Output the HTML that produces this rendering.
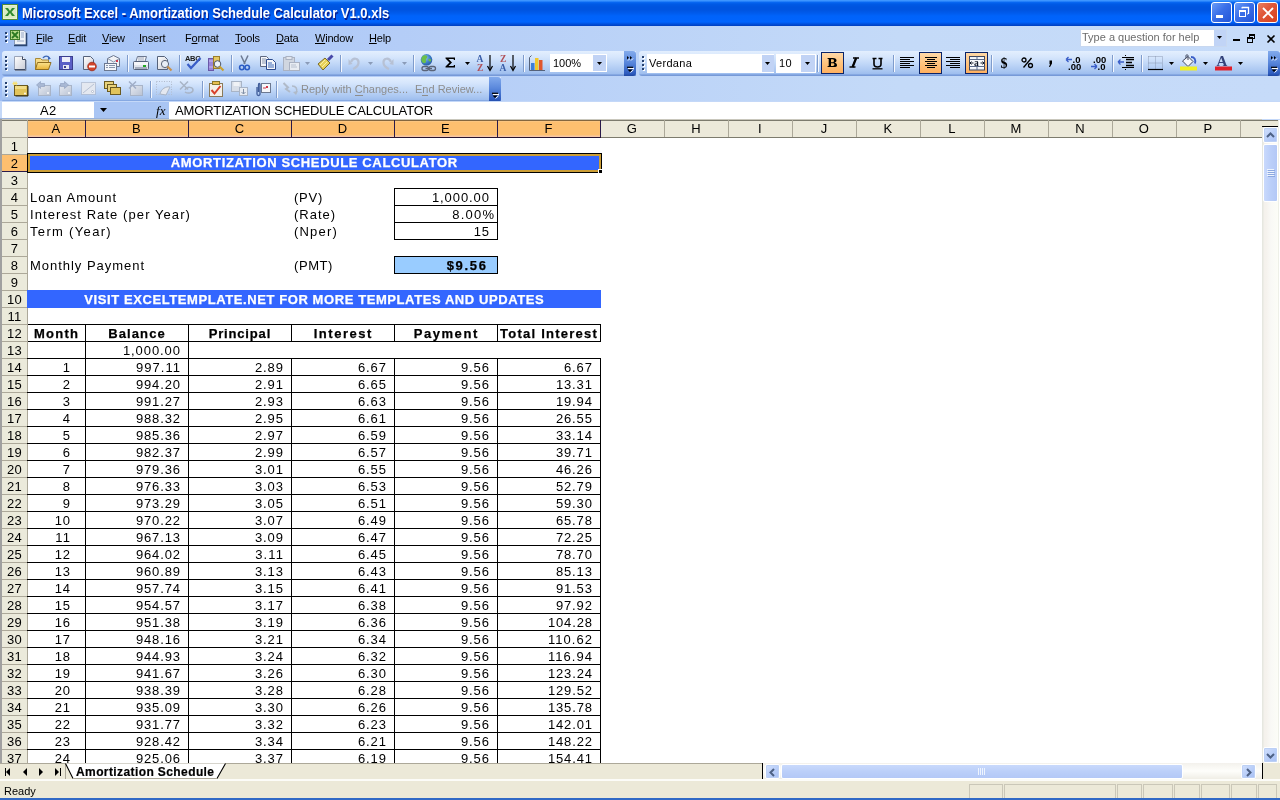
<!DOCTYPE html><html><head><meta charset="utf-8"><style>
html,body{margin:0;padding:0;}
body{width:1280px;height:800px;overflow:hidden;position:relative;background:#fff;will-change:transform;font-family:"Liberation Sans",sans-serif;}
div{box-sizing:border-box;}
.t{position:absolute;white-space:nowrap;font-size:13px;line-height:17px;color:#000;letter-spacing:0.65px;}
.b{font-weight:bold;letter-spacing:0.6px;}
.r{text-align:right;}
.c{text-align:center;}
.hd{position:absolute;font-size:13px;line-height:16px;text-align:center;color:#000;white-space:nowrap;}
.mn{position:absolute;top:32px;font-size:11px;line-height:12px;color:#000;white-space:nowrap;letter-spacing:-0.2px;}
.mn u{text-decoration:underline;text-underline-offset:1px;text-decoration-thickness:1px;}
svg{position:absolute;overflow:visible;}
</style></head><body>
<div style="position:absolute;left:0px;top:0px;width:1280px;height:26px;background:linear-gradient(#3D95FF 0px,#3D95FF 1px,#0A6AF4 2px,#005AE6 4px,#0054DF 7px,#0054E0 10px,#005BEC 13px,#0063FA 16px,#0064FE 22px,#0050DD 24px,#003FBF 26px);"></div>
<svg style="left:2px;top:4px" width="16" height="16" viewBox="0 0 16 16"><rect x="0.5" y="0.5" width="15" height="15" fill="#E8F2D4" stroke="#4E8A3A"/><rect x="2" y="2" width="12" height="12" fill="#D9EBC2"/><path d="M3 4h3l2 3 2-3h3l-3.5 4 3.5 4h-3l-2-3-2 3H3l3.5-4z" fill="#2F8A2F"/></svg>
<div style="position:absolute;left:22px;top:5px;font-size:13px;line-height:16px;font-weight:bold;color:#fff;text-shadow:1px 1px #0A1E8C;transform:scaleY(1.12);transform-origin:0 0;">Microsoft Excel - Amortization Schedule Calculator V1.0.xls</div>
<div style="position:absolute;left:1211px;top:2px;width:21px;height:21px;background:linear-gradient(135deg,#6A9CF8,#3B6FE8 45%,#2255D8);border:1px solid #fff;border-radius:3px;"></div>
<div style="position:absolute;left:1234px;top:2px;width:21px;height:21px;background:linear-gradient(135deg,#6A9CF8,#3B6FE8 45%,#2255D8);border:1px solid #fff;border-radius:3px;"></div>
<div style="position:absolute;left:1257px;top:2px;width:21px;height:21px;background:linear-gradient(135deg,#E98060,#E0583A 40%,#D8401E);border:1px solid #fff;border-radius:3px;"></div>
<div style="position:absolute;left:1216px;top:15px;width:7px;height:3px;background:#fff;"></div>
<svg style="left:1238px;top:6px" width="12" height="12"><path d="M4 1.5H10.5V8" stroke="#fff" stroke-width="1.3" fill="none"/><path d="M4 1V2.5M10 8H9" stroke="#fff"/></svg>
<div style="position:absolute;left:1239px;top:10px;width:7px;height:7px;border:1px solid #fff;border-top-width:2px;"></div>
<svg style="left:1262px;top:7px" width="12" height="12"><path d="M1 1L11 11M11 1L1 11" stroke="#fff" stroke-width="1.8"/></svg>
<div style="position:absolute;left:0px;top:26px;width:1280px;height:76px;background:linear-gradient(90deg,#A0BFF5 0px,#B4CDF7 400px,#C4DAF8 900px,#C6DBF9 1280px);"></div>
<div style="position:absolute;left:5px;top:32px;width:2px;height:2px;background:#27416F;box-shadow:1px 1px #fff;"></div>
<div style="position:absolute;left:5px;top:36px;width:2px;height:2px;background:#27416F;box-shadow:1px 1px #fff;"></div>
<div style="position:absolute;left:5px;top:40px;width:2px;height:2px;background:#27416F;box-shadow:1px 1px #fff;"></div>
<svg style="left:10px;top:29px" width="18" height="18" viewBox="0 0 18 18"><path d="M4.5 1.5H14L16.5 4V15.5H4.5Z" fill="#EEF2F8" stroke="#8A9AB8"/><path d="M16.5 4V16.5H4" stroke="#2B4570" stroke-width="1.6" fill="none"/><path d="M11 4h3M11 6h3M11 8h3M7 12h7" stroke="#98A8C4"/><rect x="0.5" y="1.5" width="9" height="9" fill="#B9DC8A" stroke="#3F7B2B"/><path d="M2 3l6 6M8 3l-6 6" stroke="#2C7A22" stroke-width="1.8"/></svg>
<div class="mn" style="left:36px;"><u>F</u>ile</div>
<div class="mn" style="left:68px;"><u>E</u>dit</div>
<div class="mn" style="left:102px;"><u>V</u>iew</div>
<div class="mn" style="left:139px;"><u>I</u>nsert</div>
<div class="mn" style="left:185px;">F<u>o</u>rmat</div>
<div class="mn" style="left:235px;"><u>T</u>ools</div>
<div class="mn" style="left:276px;"><u>D</u>ata</div>
<div class="mn" style="left:315px;"><u>W</u>indow</div>
<div class="mn" style="left:369px;"><u>H</u>elp</div>
<div style="position:absolute;left:1080px;top:29px;width:147px;height:18px;background:#fff;border:1px solid #C8D8F0;"></div>
<div style="position:absolute;left:1082px;top:31px;font-size:11px;line-height:13px;color:#6D6D6D;">Type a question for help</div>
<div style="position:absolute;left:1214px;top:30px;width:12px;height:16px;background:#C1D4F6;"></div>
<svg style="left:1217px;top:36px" width="6" height="4"><path d="M0 0h5L2.5 3z" fill="#000"/></svg>
<div style="position:absolute;left:1233px;top:39px;width:7px;height:2px;background:#000;"></div>
<div style="position:absolute;left:1249px;top:34px;width:6px;height:5px;border:1px solid #000;border-top-width:2px;"></div>
<div style="position:absolute;left:1247px;top:37px;width:6px;height:6px;border:1px solid #000;border-top-width:2px;background:#C6DBF9;"></div>
<svg style="left:1267px;top:35px" width="8" height="8"><path d="M0.5 0.5L7.5 7.5M7.5 0.5L0.5 7.5" stroke="#000" stroke-width="1.6"/></svg>
<div style="position:absolute;left:2px;top:51px;width:634px;height:25px;background:linear-gradient(#E3EFFE 0px,#D6E6FC 6px,#C3D9F8 12px,#A9C6F1 20px,#9DBDEE 23px,#6F94D6 24px,#7F9FD8 25px);border-radius:3px 0 0 3px;"></div>
<div style="position:absolute;left:624px;top:51px;width:12px;height:25px;background:linear-gradient(#82AAEC,#5A88DC 45%,#2D5BBE 90%,#1E46A0);border-radius:0 3px 3px 0;"></div>
<svg style="left:626px;top:55px" width="9" height="18"><path d="M2 5.5L4 3.5M5 5.5L7 3.5" stroke="#fff" stroke-width="1"/><path d="M1 1V4.5L3 2.8ZM4 1V4.5L6 2.8Z" fill="#000"/><path d="M2 13.5H8" stroke="#fff" stroke-width="1.2"/><path d="M1 12.3H7" stroke="#000" stroke-width="1.2"/><path d="M1.5 14.5H6.5L4 17Z" fill="#000"/><path d="M4.5 17.5L7.5 14.8" stroke="#fff"/></svg>
<div style="position:absolute;left:639px;top:51px;width:641px;height:25px;background:linear-gradient(#E3EFFE 0px,#D6E6FC 6px,#C3D9F8 12px,#A9C6F1 20px,#9DBDEE 23px,#6F94D6 24px,#7F9FD8 25px);border-radius:3px 0 0 3px;"></div>
<div style="position:absolute;left:1268px;top:51px;width:12px;height:25px;background:linear-gradient(#82AAEC,#5A88DC 45%,#2D5BBE 90%,#1E46A0);border-radius:0 3px 3px 0;"></div>
<svg style="left:1270px;top:55px" width="9" height="18"><path d="M2 5.5L4 3.5M5 5.5L7 3.5" stroke="#fff" stroke-width="1"/><path d="M1 1V4.5L3 2.8ZM4 1V4.5L6 2.8Z" fill="#000"/><path d="M2 13.5H8" stroke="#fff" stroke-width="1.2"/><path d="M1 12.3H7" stroke="#000" stroke-width="1.2"/><path d="M1.5 14.5H6.5L4 17Z" fill="#000"/><path d="M4.5 17.5L7.5 14.8" stroke="#fff"/></svg>
<div style="position:absolute;left:2px;top:77px;width:499px;height:25px;background:linear-gradient(#E3EFFE 0px,#D6E6FC 6px,#C3D9F8 12px,#A9C6F1 20px,#9DBDEE 23px,#6F94D6 24px,#7F9FD8 25px);border-radius:3px 0 0 3px;"></div>
<div style="position:absolute;left:489px;top:77px;width:12px;height:25px;background:linear-gradient(#82AAEC,#5A88DC 45%,#2D5BBE 90%,#1E46A0);border-radius:0 3px 3px 0;"></div>
<svg style="left:491px;top:81px" width="9" height="18"><path d="M2 13.5H8" stroke="#fff" stroke-width="1.2"/><path d="M1 12.3H7" stroke="#000" stroke-width="1.2"/><path d="M1.5 14.5H6.5L4 17Z" fill="#000"/><path d="M4.5 17.5L7.5 14.8" stroke="#fff"/></svg>
<div style="position:absolute;left:5px;top:56px;width:2px;height:2px;background:#27416F;box-shadow:1px 1px #fff;"></div>
<div style="position:absolute;left:5px;top:60px;width:2px;height:2px;background:#27416F;box-shadow:1px 1px #fff;"></div>
<div style="position:absolute;left:5px;top:64px;width:2px;height:2px;background:#27416F;box-shadow:1px 1px #fff;"></div>
<div style="position:absolute;left:5px;top:68px;width:2px;height:2px;background:#27416F;box-shadow:1px 1px #fff;"></div>
<div style="position:absolute;left:642px;top:56px;width:2px;height:2px;background:#27416F;box-shadow:1px 1px #fff;"></div>
<div style="position:absolute;left:642px;top:60px;width:2px;height:2px;background:#27416F;box-shadow:1px 1px #fff;"></div>
<div style="position:absolute;left:642px;top:64px;width:2px;height:2px;background:#27416F;box-shadow:1px 1px #fff;"></div>
<div style="position:absolute;left:642px;top:68px;width:2px;height:2px;background:#27416F;box-shadow:1px 1px #fff;"></div>
<div style="position:absolute;left:5px;top:82px;width:2px;height:2px;background:#27416F;box-shadow:1px 1px #fff;"></div>
<div style="position:absolute;left:5px;top:86px;width:2px;height:2px;background:#27416F;box-shadow:1px 1px #fff;"></div>
<div style="position:absolute;left:5px;top:90px;width:2px;height:2px;background:#27416F;box-shadow:1px 1px #fff;"></div>
<div style="position:absolute;left:5px;top:94px;width:2px;height:2px;background:#27416F;box-shadow:1px 1px #fff;"></div>
<div style="position:absolute;left:127px;top:55px;width:1px;height:17px;background:#7F9CCC;box-shadow:1px 0 #F4F8FF;"></div>
<div style="position:absolute;left:179px;top:55px;width:1px;height:17px;background:#7F9CCC;box-shadow:1px 0 #F4F8FF;"></div>
<div style="position:absolute;left:231px;top:55px;width:1px;height:17px;background:#7F9CCC;box-shadow:1px 0 #F4F8FF;"></div>
<div style="position:absolute;left:340px;top:55px;width:1px;height:17px;background:#7F9CCC;box-shadow:1px 0 #F4F8FF;"></div>
<div style="position:absolute;left:413px;top:55px;width:1px;height:17px;background:#7F9CCC;box-shadow:1px 0 #F4F8FF;"></div>
<div style="position:absolute;left:523px;top:55px;width:1px;height:17px;background:#7F9CCC;box-shadow:1px 0 #F4F8FF;"></div>
<div style="position:absolute;left:817px;top:55px;width:1px;height:17px;background:#7F9CCC;box-shadow:1px 0 #F4F8FF;"></div>
<div style="position:absolute;left:893px;top:55px;width:1px;height:17px;background:#7F9CCC;box-shadow:1px 0 #F4F8FF;"></div>
<div style="position:absolute;left:991px;top:55px;width:1px;height:17px;background:#7F9CCC;box-shadow:1px 0 #F4F8FF;"></div>
<div style="position:absolute;left:1112px;top:55px;width:1px;height:17px;background:#7F9CCC;box-shadow:1px 0 #F4F8FF;"></div>
<div style="position:absolute;left:1141px;top:55px;width:1px;height:17px;background:#7F9CCC;box-shadow:1px 0 #F4F8FF;"></div>
<div style="position:absolute;left:150px;top:81px;width:1px;height:17px;background:#7F9CCC;box-shadow:1px 0 #F4F8FF;"></div>
<div style="position:absolute;left:202px;top:81px;width:1px;height:17px;background:#7F9CCC;box-shadow:1px 0 #F4F8FF;"></div>
<div style="position:absolute;left:276px;top:81px;width:1px;height:17px;background:#7F9CCC;box-shadow:1px 0 #F4F8FF;"></div>
<div style="position:absolute;left:550px;top:54px;width:57px;height:18px;background:#fff;"></div>
<div style="position:absolute;left:553px;top:57px;font-size:11px;line-height:13px;">100%</div>
<div style="position:absolute;left:593px;top:55px;width:13px;height:16px;background:#C1D3F5;"></div>
<svg style="left:597px;top:62px" width="6" height="4"><path d="M0 0h5L2.5 3z" fill="#000"/></svg>
<div style="position:absolute;left:821px;top:52px;width:23px;height:22px;background:linear-gradient(#FFD9A8,#FFC47E 50%,#FFB060);border:1px solid #0A246A;"></div>
<div style="position:absolute;left:919px;top:52px;width:23px;height:22px;background:linear-gradient(#FFD9A8,#FFC47E 50%,#FFB060);border:1px solid #0A246A;"></div>
<div style="position:absolute;left:965px;top:52px;width:23px;height:22px;background:linear-gradient(#FFD9A8,#FFC47E 50%,#FFB060);border:1px solid #0A246A;"></div>
<svg style="left:0px;top:0px" width="1" height="1" viewBox="0 0 1 1"><defs>
<linearGradient id="gpaper" x1="0" y1="0" x2="1" y2="1"><stop offset="0" stop-color="#fff"/><stop offset="1" stop-color="#C9CCD6"/></linearGradient>
<linearGradient id="gfold" x1="0" y1="0" x2="0" y2="1"><stop offset="0" stop-color="#FBE38E"/><stop offset="1" stop-color="#E9B437"/></linearGradient>
<linearGradient id="gdis" x1="0" y1="0" x2="1" y2="1"><stop offset="0" stop-color="#E6EAF2"/><stop offset="1" stop-color="#B9C2D2"/></linearGradient>
</defs></svg><svg style="left:14px;top:56px" width="12" height="15" viewBox="0 0 12 15"><path d="M0.5 0.5H8.5L11.5 3.5V13.5H0.5Z" fill="url(#gpaper)" stroke="#9AA4B8"/><path d="M11.5 3.5V13.5H0.5" stroke="#3C4A64" fill="none"/><path d="M1 14.5H12V4" stroke="#7C88A0" fill="none"/><path d="M8.5 0.5V3.5H11.5" fill="#fff" stroke="#3C4A64"/></svg><svg style="left:35px;top:55px" width="17" height="16" viewBox="0 0 17 16"><path d="M0.5 3.5H5.5L7 5H13.5V14.5H0.5Z" fill="#F6DA86" stroke="#A88A3A"/><path d="M2.5 7.5H16L13.5 14.5H0.5Z" fill="url(#gfold)" stroke="#8F6E20"/><path d="M8 3C9.5 0.5 13 0.5 14.5 3" stroke="#3F6AB8" stroke-width="1.4" fill="none"/><path d="M13 1.5L16 3.5L13 5z" fill="#3F6AB8"/></svg><svg style="left:59px;top:56px" width="14" height="14" viewBox="0 0 14 14"><rect x="0.5" y="0.5" width="13" height="13" fill="#5B5FC6" stroke="#3C3F8E"/><rect x="3" y="1" width="8" height="5" fill="#EDEEFA"/><rect x="4" y="9" width="6" height="4" fill="#E8E8F2"/><rect x="5" y="10" width="2" height="2" fill="#3C3F8E"/></svg><svg style="left:83px;top:56px" width="14" height="15" viewBox="0 0 14 15"><path d="M0.5 0.5H7.5L10.5 3.5V13.5H0.5Z" fill="url(#gpaper)" stroke="#55627A"/><circle cx="9" cy="10.5" r="4.3" fill="#D2442A" stroke="#9A2A18" stroke-width="0.8"/><rect x="6" y="9.5" width="6" height="2" fill="#fff"/></svg><svg style="left:104px;top:55px" width="17" height="16" viewBox="0 0 17 16"><path d="M3.5 3.5L9.5 0.5L15.5 3.5V11.5H3.5Z" fill="#F0F2F6" stroke="#6C7890"/><path d="M3.5 3.5L9.5 7L15.5 3.5" fill="none" stroke="#8A96AC"/><rect x="12" y="5" width="2" height="2" fill="#D2384A"/><rect x="0.5" y="8.5" width="12" height="7" fill="#F4F6FA" stroke="#6C7890"/><path d="M2 10.5h2M5 10.5h6M2 12.5h2M5 12.5h6" stroke="#8A96AC"/></svg><svg style="left:133px;top:56px" width="16" height="15" viewBox="0 0 16 15"><path d="M4.5 0.5H13.5L12 5.5H3Z" fill="#F4F6FA" stroke="#6C7890"/><path d="M5 2h6M5 4h6" stroke="#A0A8BA"/><rect x="0.5" y="5.5" width="15" height="8" rx="1" fill="#E0E4EC" stroke="#55627A"/><rect x="1" y="6" width="14" height="3" fill="#F5F6FA"/><rect x="10" y="9" width="3" height="2" fill="#24A824"/><rect x="2" y="11" width="12" height="2" fill="#A6AEBE"/></svg><svg style="left:157px;top:56px" width="16" height="16" viewBox="0 0 16 16"><path d="M0.5 0.5H7.5L10.5 3.5V13.5H0.5Z" fill="url(#gpaper)" stroke="#55627A"/><circle cx="8" cy="8" r="3.6" fill="#E8EEF6" stroke="#5A6478" stroke-width="1"/><path d="M10.5 10.5L14.5 14.5" stroke="#C8904A" stroke-width="2.2"/></svg><svg style="left:185px;top:55px" width="17" height="15" viewBox="0 0 17 15"><text x="0" y="6" font-family="Liberation Sans" font-weight="bold" font-size="7.5" fill="#1A1A1A" letter-spacing="-0.3">ABC</text><path d="M2.5 9L6 13L15.5 3" stroke="#3A5EC8" stroke-width="2.2" fill="none"/></svg><svg style="left:208px;top:55px" width="17" height="17" viewBox="0 0 17 17"><rect x="0.5" y="3.5" width="5" height="12" fill="#9A86D8" stroke="#6A58A8"/><rect x="5.5" y="1.5" width="6" height="12" fill="#E4C862" stroke="#9C7E2A"/><path d="M1 6h4M1 12h4" stroke="#C9BEF0"/><circle cx="9.5" cy="9" r="3.3" fill="#EEF2F8" stroke="#4C5468"/><path d="M11.5 11.5L15.5 15.5" stroke="#C8A030" stroke-width="2.2"/></svg><svg style="left:239px;top:55px" width="11" height="16" viewBox="0 0 11 16"><path d="M2 0.5L6 9M9 0.5L5 9" stroke="#6C7A92" stroke-width="1.5"/><circle cx="2.8" cy="12.5" r="2.2" fill="none" stroke="#2B5CC4" stroke-width="1.6"/><circle cx="8.2" cy="12.5" r="2.2" fill="none" stroke="#2B5CC4" stroke-width="1.6"/></svg><svg style="left:260px;top:56px" width="16" height="14" viewBox="0 0 16 14"><path d="M0.5 0.5H6.5L8.5 2.5V10.5H0.5Z" fill="#F4F6FA" stroke="#5E6880"/><path d="M2 3h4M2 5h5M2 7h5" stroke="#8A96AC"/><path d="M6.5 3.5H12.5L15.5 6.5V13.5H6.5Z" fill="#F4F6FA" stroke="#2C4A8C"/><path d="M8 7h4M8 9h6M8 11h6" stroke="#3F6AB8"/></svg><svg style="left:283px;top:56px" width="17" height="15" viewBox="0 0 17 15"><rect x="0.5" y="1.5" width="11" height="13" fill="#D0D6E0" stroke="#AAB2C2"/><rect x="3" y="0.5" width="6" height="3" fill="#E2E6EE" stroke="#AAB2C2"/><rect x="6.5" y="6.5" width="10" height="8" fill="#E8ECF2" stroke="#AAB2C2"/><path d="M8 9h5M8 11h6" stroke="#B8C0CE"/></svg><svg style="left:305px;top:62px" width="6" height="4" viewBox="0 0 6 4"><path d="M0 0h5L2.5 3z" fill="#8A9BB8"/></svg><svg style="left:317px;top:55px" width="17" height="16" viewBox="0 0 17 16"><path d="M11 5L15.5 0.5" stroke="#4848A8" stroke-width="3"/><path d="M1 9L8 3L13 8L6 15Z" fill="#E8D25A" stroke="#7A6A28"/><path d="M3 10L8 5M5 12L10 7" stroke="#F8EEA8"/></svg><svg style="left:348px;top:56px" width="12" height="14" viewBox="0 0 12 14"><path d="M3 6C5 1 11 2 10.5 7C10 11 7 12 5 13" stroke="#B7C1D4" stroke-width="2.2" fill="none"/><path d="M0.5 3L4.5 8L0.5 9Z" fill="#B7C1D4"/></svg><svg style="left:368px;top:62px" width="6" height="4" viewBox="0 0 6 4"><path d="M0 0h5L2.5 3z" fill="#8A9BB8"/></svg><svg style="left:382px;top:56px" width="12" height="14" viewBox="0 0 12 14"><path d="M9 6C7 1 1 2 1.5 7C2 11 5 12 7 13" stroke="#B7C1D4" stroke-width="2.2" fill="none"/><path d="M11.5 3L7.5 8L11.5 9Z" fill="#B7C1D4"/></svg><svg style="left:402px;top:62px" width="6" height="4" viewBox="0 0 6 4"><path d="M0 0h5L2.5 3z" fill="#8A9BB8"/></svg><svg style="left:419px;top:53px" width="18" height="19" viewBox="0 0 18 19"><defs><radialGradient id="gglobe" cx="0.4" cy="0.35" r="0.7"><stop offset="0" stop-color="#8FC8F0"/><stop offset="0.6" stop-color="#3A7CC8"/><stop offset="1" stop-color="#2A5A9A"/></radialGradient></defs><circle cx="7.5" cy="6.8" r="5.8" fill="url(#gglobe)"/><path d="M3 4C4 2 7 1.5 8 3C9 5 6 6 7 8C7.5 10 5 11 3.5 9.5C2 8 2 6 3 4Z" fill="#6CC04A"/><path d="M9.5 6C11 5.5 12.5 6.5 12 8C11 9 10 8.5 9.5 7.5Z" fill="#6CC04A"/><rect x="3" y="13.5" width="6.5" height="4" rx="2" fill="none" stroke="#5A6478" stroke-width="1.3"/><rect x="10" y="13.5" width="6.5" height="4" rx="2" fill="none" stroke="#5A6478" stroke-width="1.3"/><path d="M6.5 15.5H13" stroke="#5A6478" stroke-width="1.3"/></svg><svg style="left:445px;top:57px" width="11" height="11" viewBox="0 0 11 11"><path d="M0.5 0.5H10V3H9L8.5 2H3.5L7 5.5L3.5 9H8.5L9 8H10V10.5H0.5V9.5L4.5 5.5L0.5 1.5Z" fill="#000"/></svg><svg style="left:465px;top:62px" width="6" height="4" viewBox="0 0 6 4"><path d="M0 0h5L2.5 3z" fill="#000"/></svg><svg style="left:476px;top:54px" width="17" height="18" viewBox="0 0 17 18"><text x="0.5" y="7.5" font-family="Liberation Serif" font-weight="bold" font-size="9.5" fill="#3A5EA8">A</text><text x="1" y="16.5" font-family="Liberation Serif" font-weight="bold" font-size="9.5" fill="#B05058">Z</text><path d="M14 1V15" stroke="#000" stroke-width="1.2"/><path d="M11.5 12L14 16.5L16.5 12" stroke="#000" stroke-width="1.2" fill="none"/></svg><svg style="left:499px;top:54px" width="17" height="18" viewBox="0 0 17 18"><text x="1" y="7.5" font-family="Liberation Serif" font-weight="bold" font-size="9.5" fill="#B05058">Z</text><text x="0.5" y="16.5" font-family="Liberation Serif" font-weight="bold" font-size="9.5" fill="#3A5EA8">A</text><path d="M14 1V15" stroke="#000" stroke-width="1.2"/><path d="M11.5 12L14 16.5L16.5 12" stroke="#000" stroke-width="1.2" fill="none"/></svg><svg style="left:529px;top:55px" width="17" height="16" viewBox="0 0 17 16"><path d="M0.5 15.5V2.5L2.5 0.5" stroke="#55627A" fill="none"/><rect x="2" y="8" width="3.5" height="7" fill="#3C7ED8"/><rect x="6" y="3" width="3.5" height="12" fill="#F2C72A"/><rect x="10" y="5" width="3.5" height="10" fill="#E0562E"/><path d="M0.5 15.5H16" stroke="#55627A"/></svg><svg style="left:827px;top:57px" width="11" height="11" viewBox="0 0 11 11"><path d="M0.5 1H6C8.5 1 9.5 2.2 9.5 3.6C9.5 4.8 8.6 5.4 7.6 5.7C9 6 10 6.8 10 8.2C10 9.8 8.8 10 6.5 10H0.5V9.2L1.7 9V2L0.5 1.8Z" fill="#000"/><path d="M4 2.2V5.2H5.5C6.6 5.2 7 4.6 7 3.7C7 2.8 6.6 2.2 5.5 2.2ZM4 6.3V8.9H5.8C7 8.9 7.4 8.3 7.4 7.6C7.4 6.8 6.9 6.3 5.8 6.3Z" fill="#FDBF6F"/></svg><svg style="left:849px;top:57px" width="11" height="11" viewBox="0 0 11 11"><path d="M4 1H10M0.5 10H6.5M7 1L3.5 10" stroke="#000" stroke-width="1.4" fill="none"/><path d="M7.2 1L3.6 10" stroke="#000" stroke-width="2.2"/></svg><svg style="left:872px;top:57px" width="11" height="13" viewBox="0 0 11 13"><path d="M0.5 1.5H4.5M6.5 1.5H10.5M2 1.5V7C2 9 3.5 10 5.5 10C7.5 10 9 9 9 7V1.5" stroke="#000" stroke-width="1.6" fill="none"/><path d="M0.5 11.8H10.5" stroke="#000" stroke-width="1.3"/></svg><svg style="left:900px;top:57px" width="14" height="12" viewBox="0 0 14 12"><rect x="0" y="0" width="14" height="1" fill="#000"/><rect x="0" y="2" width="10" height="1" fill="#000"/><rect x="0" y="4" width="14" height="1" fill="#000"/><rect x="0" y="6" width="10" height="1" fill="#000"/><rect x="0" y="8" width="14" height="1" fill="#000"/><rect x="0" y="10" width="10" height="1" fill="#000"/></svg><svg style="left:924px;top:57px" width="14" height="12" viewBox="0 0 14 12"><rect x="1.0" y="0" width="12" height="1" fill="#000"/><rect x="3.0" y="2" width="8" height="1" fill="#000"/><rect x="1.0" y="4" width="12" height="1" fill="#000"/><rect x="3.0" y="6" width="8" height="1" fill="#000"/><rect x="1.0" y="8" width="12" height="1" fill="#000"/><rect x="3.0" y="10" width="8" height="1" fill="#000"/></svg><svg style="left:946px;top:57px" width="14" height="12" viewBox="0 0 14 12"><rect x="0" y="0" width="14" height="1" fill="#000"/><rect x="4" y="2" width="10" height="1" fill="#000"/><rect x="0" y="4" width="14" height="1" fill="#000"/><rect x="4" y="6" width="10" height="1" fill="#000"/><rect x="0" y="8" width="14" height="1" fill="#000"/><rect x="4" y="10" width="10" height="1" fill="#000"/></svg><svg style="left:969px;top:56px" width="16" height="15" viewBox="0 0 16 15"><rect x="0.5" y="0.5" width="15" height="13.5" fill="#E6ECF4" stroke="#404860"/><path d="M1 2.5H15M1 11.5H15" stroke="#F8FAFD" stroke-width="2"/><path d="M0.5 3.5H15.5M0.5 10.5H15.5M8 0.5V3.5M8 10.5V14" stroke="#5A6A8A"/><rect x="1" y="4" width="14" height="6" fill="#F8FAFD"/><text x="5" y="9.5" font-family="Liberation Serif" font-weight="bold" font-size="9.5" fill="#101828">a</text><path d="M1 7H4.5M11.5 7H15M2.5 5.5L1 7L2.5 8.5M13.5 5.5L15 7L13.5 8.5" stroke="#101828" fill="none"/></svg><svg style="left:1000px;top:56px" width="10" height="14" viewBox="0 0 10 14"><text x="0.5" y="11.5" font-family="Liberation Serif" font-weight="bold" font-size="14" fill="#000">$</text></svg><svg style="left:1021px;top:57px" width="13" height="12" viewBox="0 0 13 12"><circle cx="3" cy="3" r="2" fill="none" stroke="#000" stroke-width="1.3"/><circle cx="9.5" cy="8.5" r="2" fill="none" stroke="#000" stroke-width="1.3"/><path d="M10.5 1L2.5 10.5" stroke="#000" stroke-width="1.3"/></svg><svg style="left:1048px;top:60px" width="5" height="8" viewBox="0 0 5 8"><path d="M1.5 0.5h2.5v3L2 7h-1l1-3h-0.5z" fill="#000"/></svg><svg style="left:1065px;top:55px" width="17" height="16" viewBox="0 0 17 16"><path d="M1 4.5H7M1 4.5L3.5 2M1 4.5L3.5 7" stroke="#3A5EC8" stroke-width="1.3" fill="none"/><text x="7.5" y="7.5" font-family="Liberation Sans" font-weight="bold" font-size="9.5" fill="#000">.0</text><text x="3" y="14.5" font-family="Liberation Sans" font-weight="bold" font-size="9.5" fill="#000">.00</text></svg><svg style="left:1090px;top:55px" width="17" height="16" viewBox="0 0 17 16"><text x="3" y="7.5" font-family="Liberation Sans" font-weight="bold" font-size="9.5" fill="#000">.00</text><path d="M1 11.5H7M7 11.5L4.5 9M7 11.5L4.5 14" stroke="#3A5EC8" stroke-width="1.3" fill="none"/><text x="7.5" y="14.5" font-family="Liberation Sans" font-weight="bold" font-size="9.5" fill="#000">.0</text></svg><svg style="left:1117px;top:54px" width="18" height="16" viewBox="0 0 18 16"><path d="M8 1.5h1M5 3.5H17M5 13.5H17M8 15.5h1" stroke="#000"/><path d="M9 5.5H17M9 8.5H15M9 11.5H17" stroke="#000" stroke-width="1.6"/><path d="M1 8H7M1 8L3.5 5.5M1 8L3.5 10.5" stroke="#3A5EC8" stroke-width="1.3" fill="none"/></svg><svg style="left:1148px;top:56px" width="15" height="15" viewBox="0 0 15 15"><path d="M0.5 0.5H14.5M0.5 7H14.5M0.5 0.5V13M7.5 0.5V13M14.5 0.5V13" stroke="#7A88A0" stroke-dasharray="1 1" stroke-width="0.9" fill="none" opacity="0.85"/><path d="M0 13.5H15" stroke="#000" stroke-width="1.2"/></svg><svg style="left:1169px;top:62px" width="6" height="4" viewBox="0 0 6 4"><path d="M0 0h5L2.5 3z" fill="#000"/></svg><svg style="left:1180px;top:54px" width="18" height="18" viewBox="0 0 18 18"><path d="M2.5 7L8 2.5L13 7.5L8 12.5Z" fill="#F4F6FA" stroke="#404860"/><path d="M6 4V1.5C6 0.5 8 0.5 8 1.5V6" stroke="#404860" fill="none"/><path d="M11 3C14.5 3 16 5.5 15 9.5" stroke="#3A5EC8" stroke-width="1.8" fill="none"/><rect x="0" y="12.5" width="17" height="4" fill="#F0F020"/></svg><svg style="left:1203px;top:62px" width="6" height="4" viewBox="0 0 6 4"><path d="M0 0h5L2.5 3z" fill="#000"/></svg><svg style="left:1215px;top:53px" width="18" height="18" viewBox="0 0 18 18"><text x="1.5" y="12.5" font-family="Liberation Serif" font-weight="bold" font-size="15" fill="#34427A">A</text><rect x="0" y="13.5" width="17" height="4" fill="#E0202A"/></svg><svg style="left:1238px;top:62px" width="6" height="4" viewBox="0 0 6 4"><path d="M0 0h5L2.5 3z" fill="#000"/></svg><svg style="left:12px;top:81px" width="17" height="17" viewBox="0 0 17 17"><rect x="2.5" y="4.5" width="13" height="10" fill="#E2C45A" stroke="#6A5A20"/><rect x="3" y="5" width="11" height="3" fill="#F2DC86"/><path d="M16 5V15H3.5" stroke="#3A3010" fill="none"/><path d="M3 0.5V4M0.5 2.5H5.5M1 0.8L5 4.2M5 0.8L1 4.2" stroke="#F8E070"/><circle cx="13" cy="12.5" r="0.9" fill="#fff"/></svg><svg style="left:36px;top:81px" width="16" height="16" viewBox="0 0 16 16"><rect x="2.5" y="4.5" width="12" height="10" fill="url(#gdis)" stroke="#A8B4C8"/><path d="M0.5 4L4.5 0.5V2.5H8.5V5.5H4.5V7.5Z" fill="#A8B8D4" stroke="#8C9CBC" stroke-width="0.6"/><circle cx="12" cy="12" r="0.9" fill="#fff"/></svg><svg style="left:58px;top:81px" width="16" height="16" viewBox="0 0 16 16"><rect x="1.5" y="4.5" width="12" height="10" fill="url(#gdis)" stroke="#A8B4C8"/><path d="M10.5 4L6.5 0.5V2.5H2.5V5.5H6.5V7.5Z" fill="#A8B8D4" stroke="#8C9CBC" stroke-width="0.6"/><circle cx="11" cy="12" r="0.9" fill="#fff"/></svg><svg style="left:81px;top:81px" width="16" height="16" viewBox="0 0 16 16"><rect x="0.5" y="1.5" width="14" height="12" fill="#E4E8F0" stroke="#98A4BC" stroke-dasharray="1 1"/><path d="M2 12L13 3" stroke="#B8C2D4"/><circle cx="11.5" cy="10.5" r="1" fill="#fff" stroke="#98A4BC" stroke-width="0.6"/></svg><svg style="left:104px;top:81px" width="17" height="16" viewBox="0 0 17 16"><rect x="0.5" y="0.5" width="9" height="7" fill="#E8D27A" stroke="#6A5A20"/><rect x="3.5" y="3.5" width="9" height="7" fill="#E8D27A" stroke="#6A5A20"/><rect x="6.5" y="6.5" width="10" height="7" fill="#E2C45A" stroke="#6A5A20"/></svg><svg style="left:128px;top:81px" width="16" height="16" viewBox="0 0 16 16"><rect x="2.5" y="4.5" width="12" height="10" fill="url(#gdis)" stroke="#A8B4C8"/><path d="M1 0.5L8 7.5M8 0.5L1 7.5" stroke="#A0AEC8" stroke-width="1.5"/></svg><svg style="left:156px;top:81px" width="17" height="16" viewBox="0 0 17 16"><rect x="0.5" y="0.5" width="15" height="13" fill="none" stroke="#B0BACC" stroke-dasharray="1 1.5"/><path d="M4 13C5 8 10 5 14 6L10 14Z" fill="#E4E8F0" stroke="#A8B4C6"/></svg><svg style="left:179px;top:81px" width="17" height="16" viewBox="0 0 17 16"><path d="M1 0.5L9 8.5M9 0.5L1 8.5" stroke="#A8B4C6" stroke-width="1.5"/><path d="M6 9C8 5 14 6 14 9C14 12 9 13 6 11" stroke="#A8B4C6" fill="none" stroke-width="1.5"/></svg><svg style="left:209px;top:80px" width="14" height="17" viewBox="0 0 14 17"><rect x="0.5" y="3.5" width="13" height="13" fill="#F4F0E8" stroke="#8A7A5A"/><rect x="3.5" y="1.5" width="7" height="3" fill="#E8C050" stroke="#8A7628"/><path d="M2.5 10L5.5 13.5L11.5 6" stroke="#D8402A" stroke-width="2" fill="none"/></svg><svg style="left:231px;top:81px" width="17" height="16" viewBox="0 0 17 16"><rect x="0.5" y="0.5" width="10" height="10" fill="#D8DEE8" stroke="#A8B4C6"/><rect x="2.5" y="1" width="6" height="4" fill="#F0F2F6"/><rect x="8.5" y="6.5" width="8" height="8" fill="#E8ECF2" stroke="#A8B4C6"/><path d="M12.5 8V13M10.5 11L12.5 13L14.5 11" stroke="#8090A8" fill="none"/></svg><svg style="left:254px;top:80px" width="17" height="17" viewBox="0 0 17 17"><path d="M3 7V14C3 16 6 16 6 14V5C6 3 4.5 3 4.5 5V12" stroke="#3F5C9A" stroke-width="1.3" fill="none"/><rect x="7.5" y="3.5" width="9" height="9" fill="#F4F6FA" stroke="#6C7890"/><rect x="12" y="6" width="2" height="2" fill="#D2384A"/><path d="M9 8h3" stroke="#D2384A"/></svg><svg style="left:283px;top:81px" width="16" height="16" viewBox="0 0 16 16"><path d="M0.5 2L5 6.5L3 8L7 11" stroke="#B0BAC8" stroke-width="2" fill="none"/><path d="M9 5C13 5 15 8 13 12" stroke="#B0BAC8" stroke-width="1.5" fill="none"/><path d="M10 11L13 14L15 10" fill="#B0BAC8"/></svg>
<div style="position:absolute;left:301px;top:83px;font-size:11px;line-height:13px;color:#8D8D8D;">Reply with <u style='text-decoration:none;border-bottom:1px solid #8D8D8D'>C</u>hanges...</div>
<div style="position:absolute;left:415px;top:83px;font-size:11px;line-height:13px;color:#8D8D8D;">E<u style='text-decoration:none;border-bottom:1px solid #8D8D8D'>n</u>d Review...</div>
<div style="position:absolute;left:647px;top:54px;width:127px;height:19px;background:#fff;"></div>
<div style="position:absolute;left:649px;top:57px;font-size:11px;line-height:13px;letter-spacing:0.3px;">Verdana</div>
<div style="position:absolute;left:762px;top:55px;width:12px;height:17px;background:#C1D3F5;"></div>
<svg style="left:765px;top:62px" width="6" height="4"><path d="M0 0h5L2.5 3z" fill="#000"/></svg>
<div style="position:absolute;left:776px;top:54px;width:40px;height:19px;background:#fff;"></div>
<div style="position:absolute;left:779px;top:57px;font-size:11px;line-height:13px;letter-spacing:0.3px;">10</div>
<div style="position:absolute;left:801px;top:55px;width:14px;height:17px;background:#C1D3F5;"></div>
<svg style="left:805px;top:62px" width="6" height="4"><path d="M0 0h5L2.5 3z" fill="#000"/></svg>
<div style="position:absolute;left:0px;top:101px;width:1280px;height:19px;background:#C4D8F8;"></div>
<div style="position:absolute;left:2px;top:102px;width:92px;height:16px;background:#fff;"></div>
<div style="position:absolute;left:40px;top:103px;font-size:13px;line-height:15px;letter-spacing:0.4px;">A2</div>
<div style="position:absolute;left:94px;top:102px;width:75px;height:16px;background:#A9C5F4;"></div>
<svg style="left:100px;top:108px" width="9" height="5"><path d="M0 0h7L3.5 4z" fill="#000"/></svg>
<div style="position:absolute;left:156px;top:103px;font-family:'Liberation Serif',serif;font-size:13px;line-height:15px;font-style:italic;"><i>f</i>x</div>
<div style="position:absolute;left:169px;top:102px;width:1111px;height:17px;background:#fff;"></div>
<div style="position:absolute;left:175px;top:103px;font-size:13px;line-height:15px;letter-spacing:-0.1px;">AMORTIZATION SCHEDULE CALCULATOR</div>
<div style="position:absolute;left:0px;top:118px;width:169px;height:1px;background:#9BB3DB;"></div>
<div style="position:absolute;left:0px;top:119px;width:2px;height:644px;background:#A0A0A0;"></div>
<div style="position:absolute;left:2px;top:119px;width:1260px;height:1px;background:#C9C7BC;"></div>
<div style="position:absolute;left:2px;top:120px;width:1260px;height:17px;background:#ECE9DA;border-top:1px solid #7D7B6E;"></div>
<div style="position:absolute;left:2px;top:121px;width:25px;height:16px;background:#ECE9DA;"></div>
<div style="position:absolute;left:28px;top:121px;width:572px;height:16px;background:linear-gradient(#F9CB90 0px,#FDBF6F 1px,#FDBF6F 14px,#F6C7A6 15px,#F6C7A6 16px);"></div>
<div style="position:absolute;left:27px;top:120px;width:574px;height:1px;background:#84663E;"></div>
<div style="position:absolute;left:27px;top:120px;width:1px;height:17px;background:#ACA899;"></div>
<div style="position:absolute;left:85px;top:120px;width:1px;height:17px;background:#2A1A4A;"></div>
<div style="position:absolute;left:188px;top:120px;width:1px;height:17px;background:#2A1A4A;"></div>
<div style="position:absolute;left:291px;top:120px;width:1px;height:17px;background:#2A1A4A;"></div>
<div style="position:absolute;left:394px;top:120px;width:1px;height:17px;background:#2A1A4A;"></div>
<div style="position:absolute;left:497px;top:120px;width:1px;height:17px;background:#2A1A4A;"></div>
<div style="position:absolute;left:600px;top:120px;width:1px;height:17px;background:#2A1A4A;"></div>
<div style="position:absolute;left:664px;top:120px;width:1px;height:17px;background:#ACA899;"></div>
<div style="position:absolute;left:728px;top:120px;width:1px;height:17px;background:#ACA899;"></div>
<div style="position:absolute;left:792px;top:120px;width:1px;height:17px;background:#ACA899;"></div>
<div style="position:absolute;left:856px;top:120px;width:1px;height:17px;background:#ACA899;"></div>
<div style="position:absolute;left:920px;top:120px;width:1px;height:17px;background:#ACA899;"></div>
<div style="position:absolute;left:984px;top:120px;width:1px;height:17px;background:#ACA899;"></div>
<div style="position:absolute;left:1048px;top:120px;width:1px;height:17px;background:#ACA899;"></div>
<div style="position:absolute;left:1112px;top:120px;width:1px;height:17px;background:#ACA899;"></div>
<div style="position:absolute;left:1176px;top:120px;width:1px;height:17px;background:#ACA899;"></div>
<div style="position:absolute;left:1240px;top:120px;width:1px;height:17px;background:#ACA899;"></div>
<div style="position:absolute;left:2px;top:137px;width:25px;height:1px;background:#7D7B6E;"></div>
<div style="position:absolute;left:27px;top:137px;width:574px;height:1px;background:#2A1530;"></div>
<div style="position:absolute;left:601px;top:137px;width:661px;height:1px;background:#7D7B6E;"></div>
<div class="hd" style="left:27px;top:121px;width:58px;letter-spacing:0.2px;">A</div>
<div class="hd" style="left:85px;top:121px;width:103px;letter-spacing:0.2px;">B</div>
<div class="hd" style="left:188px;top:121px;width:103px;letter-spacing:0.2px;">C</div>
<div class="hd" style="left:291px;top:121px;width:103px;letter-spacing:0.2px;">D</div>
<div class="hd" style="left:394px;top:121px;width:103px;letter-spacing:0.2px;">E</div>
<div class="hd" style="left:497px;top:121px;width:103px;letter-spacing:0.2px;">F</div>
<div class="hd" style="left:600px;top:121px;width:64px;letter-spacing:0.2px;">G</div>
<div class="hd" style="left:664px;top:121px;width:64px;letter-spacing:0.2px;">H</div>
<div class="hd" style="left:728px;top:121px;width:64px;letter-spacing:0.2px;">I</div>
<div class="hd" style="left:792px;top:121px;width:64px;letter-spacing:0.2px;">J</div>
<div class="hd" style="left:856px;top:121px;width:64px;letter-spacing:0.2px;">K</div>
<div class="hd" style="left:920px;top:121px;width:64px;letter-spacing:0.2px;">L</div>
<div class="hd" style="left:984px;top:121px;width:64px;letter-spacing:0.2px;">M</div>
<div class="hd" style="left:1048px;top:121px;width:64px;letter-spacing:0.2px;">N</div>
<div class="hd" style="left:1112px;top:121px;width:64px;letter-spacing:0.2px;">O</div>
<div class="hd" style="left:1176px;top:121px;width:64px;letter-spacing:0.2px;">P</div>
<div class="hd" style="left:1240px;top:121px;width:64px;letter-spacing:0.2px;">Q</div>
<div style="position:absolute;left:2px;top:137px;width:25px;height:626px;background:#EBEADB;"></div>
<div class="hd" style="left:2px;top:139px;width:25px;letter-spacing:0.2px;">1</div>
<div style="position:absolute;left:2px;top:154px;width:25px;height:1px;background:#ACA899;"></div>
<div style="position:absolute;left:2px;top:155px;width:25px;height:16px;background:#FDBF6F;"></div>
<div class="hd" style="left:2px;top:156px;width:25px;letter-spacing:0.2px;">2</div>
<div style="position:absolute;left:2px;top:171px;width:25px;height:1px;background:#2A1A4A;"></div>
<div class="hd" style="left:2px;top:173px;width:25px;letter-spacing:0.2px;">3</div>
<div style="position:absolute;left:2px;top:188px;width:25px;height:1px;background:#ACA899;"></div>
<div class="hd" style="left:2px;top:190px;width:25px;letter-spacing:0.2px;">4</div>
<div style="position:absolute;left:2px;top:205px;width:25px;height:1px;background:#ACA899;"></div>
<div class="hd" style="left:2px;top:207px;width:25px;letter-spacing:0.2px;">5</div>
<div style="position:absolute;left:2px;top:222px;width:25px;height:1px;background:#ACA899;"></div>
<div class="hd" style="left:2px;top:224px;width:25px;letter-spacing:0.2px;">6</div>
<div style="position:absolute;left:2px;top:239px;width:25px;height:1px;background:#ACA899;"></div>
<div class="hd" style="left:2px;top:241px;width:25px;letter-spacing:0.2px;">7</div>
<div style="position:absolute;left:2px;top:256px;width:25px;height:1px;background:#ACA899;"></div>
<div class="hd" style="left:2px;top:258px;width:25px;letter-spacing:0.2px;">8</div>
<div style="position:absolute;left:2px;top:273px;width:25px;height:1px;background:#ACA899;"></div>
<div class="hd" style="left:2px;top:275px;width:25px;letter-spacing:0.2px;">9</div>
<div style="position:absolute;left:2px;top:290px;width:25px;height:1px;background:#ACA899;"></div>
<div class="hd" style="left:2px;top:292px;width:25px;letter-spacing:0.2px;">10</div>
<div style="position:absolute;left:2px;top:307px;width:25px;height:1px;background:#ACA899;"></div>
<div class="hd" style="left:2px;top:309px;width:25px;letter-spacing:0.2px;">11</div>
<div style="position:absolute;left:2px;top:324px;width:25px;height:1px;background:#ACA899;"></div>
<div class="hd" style="left:2px;top:326px;width:25px;letter-spacing:0.2px;">12</div>
<div style="position:absolute;left:2px;top:341px;width:25px;height:1px;background:#ACA899;"></div>
<div class="hd" style="left:2px;top:343px;width:25px;letter-spacing:0.2px;">13</div>
<div style="position:absolute;left:2px;top:358px;width:25px;height:1px;background:#ACA899;"></div>
<div class="hd" style="left:2px;top:360px;width:25px;letter-spacing:0.2px;">14</div>
<div style="position:absolute;left:2px;top:375px;width:25px;height:1px;background:#ACA899;"></div>
<div class="hd" style="left:2px;top:377px;width:25px;letter-spacing:0.2px;">15</div>
<div style="position:absolute;left:2px;top:392px;width:25px;height:1px;background:#ACA899;"></div>
<div class="hd" style="left:2px;top:394px;width:25px;letter-spacing:0.2px;">16</div>
<div style="position:absolute;left:2px;top:409px;width:25px;height:1px;background:#ACA899;"></div>
<div class="hd" style="left:2px;top:411px;width:25px;letter-spacing:0.2px;">17</div>
<div style="position:absolute;left:2px;top:426px;width:25px;height:1px;background:#ACA899;"></div>
<div class="hd" style="left:2px;top:428px;width:25px;letter-spacing:0.2px;">18</div>
<div style="position:absolute;left:2px;top:443px;width:25px;height:1px;background:#ACA899;"></div>
<div class="hd" style="left:2px;top:445px;width:25px;letter-spacing:0.2px;">19</div>
<div style="position:absolute;left:2px;top:460px;width:25px;height:1px;background:#ACA899;"></div>
<div class="hd" style="left:2px;top:462px;width:25px;letter-spacing:0.2px;">20</div>
<div style="position:absolute;left:2px;top:477px;width:25px;height:1px;background:#ACA899;"></div>
<div class="hd" style="left:2px;top:479px;width:25px;letter-spacing:0.2px;">21</div>
<div style="position:absolute;left:2px;top:494px;width:25px;height:1px;background:#ACA899;"></div>
<div class="hd" style="left:2px;top:496px;width:25px;letter-spacing:0.2px;">22</div>
<div style="position:absolute;left:2px;top:511px;width:25px;height:1px;background:#ACA899;"></div>
<div class="hd" style="left:2px;top:513px;width:25px;letter-spacing:0.2px;">23</div>
<div style="position:absolute;left:2px;top:528px;width:25px;height:1px;background:#ACA899;"></div>
<div class="hd" style="left:2px;top:530px;width:25px;letter-spacing:0.2px;">24</div>
<div style="position:absolute;left:2px;top:545px;width:25px;height:1px;background:#ACA899;"></div>
<div class="hd" style="left:2px;top:547px;width:25px;letter-spacing:0.2px;">25</div>
<div style="position:absolute;left:2px;top:562px;width:25px;height:1px;background:#ACA899;"></div>
<div class="hd" style="left:2px;top:564px;width:25px;letter-spacing:0.2px;">26</div>
<div style="position:absolute;left:2px;top:579px;width:25px;height:1px;background:#ACA899;"></div>
<div class="hd" style="left:2px;top:581px;width:25px;letter-spacing:0.2px;">27</div>
<div style="position:absolute;left:2px;top:596px;width:25px;height:1px;background:#ACA899;"></div>
<div class="hd" style="left:2px;top:598px;width:25px;letter-spacing:0.2px;">28</div>
<div style="position:absolute;left:2px;top:613px;width:25px;height:1px;background:#ACA899;"></div>
<div class="hd" style="left:2px;top:615px;width:25px;letter-spacing:0.2px;">29</div>
<div style="position:absolute;left:2px;top:630px;width:25px;height:1px;background:#ACA899;"></div>
<div class="hd" style="left:2px;top:632px;width:25px;letter-spacing:0.2px;">30</div>
<div style="position:absolute;left:2px;top:647px;width:25px;height:1px;background:#ACA899;"></div>
<div class="hd" style="left:2px;top:649px;width:25px;letter-spacing:0.2px;">31</div>
<div style="position:absolute;left:2px;top:664px;width:25px;height:1px;background:#ACA899;"></div>
<div class="hd" style="left:2px;top:666px;width:25px;letter-spacing:0.2px;">32</div>
<div style="position:absolute;left:2px;top:681px;width:25px;height:1px;background:#ACA899;"></div>
<div class="hd" style="left:2px;top:683px;width:25px;letter-spacing:0.2px;">33</div>
<div style="position:absolute;left:2px;top:698px;width:25px;height:1px;background:#ACA899;"></div>
<div class="hd" style="left:2px;top:700px;width:25px;letter-spacing:0.2px;">34</div>
<div style="position:absolute;left:2px;top:715px;width:25px;height:1px;background:#ACA899;"></div>
<div class="hd" style="left:2px;top:717px;width:25px;letter-spacing:0.2px;">35</div>
<div style="position:absolute;left:2px;top:732px;width:25px;height:1px;background:#ACA899;"></div>
<div class="hd" style="left:2px;top:734px;width:25px;letter-spacing:0.2px;">36</div>
<div style="position:absolute;left:2px;top:749px;width:25px;height:1px;background:#ACA899;"></div>
<div class="hd" style="left:2px;top:751px;width:25px;letter-spacing:0.2px;">37</div>
<div style="position:absolute;left:2px;top:766px;width:25px;height:1px;background:#ACA899;"></div>
<div style="position:absolute;left:27px;top:137px;width:1px;height:626px;background:#ACA899;"></div>
<div style="position:absolute;left:2px;top:137px;width:25px;height:1px;background:#ACA899;"></div>
<div style="position:absolute;left:27px;top:154px;width:1px;height:18px;background:#000;"></div>
<div style="position:absolute;left:27px;top:153px;width:575px;height:20px;background:#000;"></div>
<div style="position:absolute;left:28px;top:154px;width:573px;height:18px;background:#CC9E36;"></div>
<div style="position:absolute;left:30px;top:156px;width:569px;height:14px;background:#3366FF;"></div>
<div style="position:absolute;left:598px;top:169px;width:5px;height:5px;background:#000;border:1px solid #fff;"></div>
<div class="t" style="left:27.32px;top:154px;width:574px;text-align:center;letter-spacing:0.642px;color:#fff;font-weight:bold;-webkit-text-stroke:0.25px currentColor;">AMORTIZATION SCHEDULE CALCULATOR</div>
<div class="t" style="left:30px;top:189px;letter-spacing:0.942px;color:#000;">Loan Amount</div>
<div class="t" style="left:294px;top:189px;letter-spacing:0.750px;color:#000;">(PV)</div>
<div class="t" style="left:30px;top:206px;letter-spacing:1.077px;color:#000;">Interest Rate (per Year)</div>
<div class="t" style="left:294px;top:206px;letter-spacing:0.979px;color:#000;">(Rate)</div>
<div class="t" style="left:30px;top:223px;letter-spacing:1.324px;color:#000;">Term (Year)</div>
<div class="t" style="left:294px;top:223px;letter-spacing:1.193px;color:#000;">(Nper)</div>
<div class="t" style="left:30px;top:257px;letter-spacing:0.970px;color:#000;">Monthly Payment</div>
<div class="t" style="left:294px;top:257px;letter-spacing:0.581px;color:#000;">(PMT)</div>
<div style="position:absolute;left:394px;top:188px;width:104px;height:52px;border:1px solid #000;"></div>
<div style="position:absolute;left:394px;top:205px;width:104px;height:1px;background:#000;"></div>
<div style="position:absolute;left:394px;top:222px;width:104px;height:1px;background:#000;"></div>
<div class="t" style="left:394px;top:189px;width:95.92px;text-align:right;letter-spacing:0.922px;color:#000;">1,000.00</div>
<div class="t" style="left:394px;top:206px;width:101.22px;text-align:right;letter-spacing:1.225px;color:#000;">8.00%</div>
<div class="t" style="left:394px;top:223px;width:95.77px;text-align:right;letter-spacing:0.766px;color:#000;">15</div>
<div style="position:absolute;left:394px;top:256px;width:104px;height:18px;background:#99CCFF;border:1px solid #000;"></div>
<div class="t" style="left:394px;top:257px;width:93.69px;text-align:right;letter-spacing:1.691px;color:#000;font-weight:bold;-webkit-text-stroke:0.25px currentColor;">$9.56</div>
<div style="position:absolute;left:27px;top:290px;width:574px;height:18px;background:#3366FF;"></div>
<div class="t" style="left:27.29px;top:291px;width:574px;text-align:center;letter-spacing:0.588px;color:#fff;font-weight:bold;-webkit-text-stroke:0.25px currentColor;">VISIT EXCELTEMPLATE.NET FOR MORE TEMPLATES AND UPDATES</div>
<div style="position:absolute;left:28px;top:324px;width:573px;height:18px;border:1px solid #000;border-left:none;"></div>
<div style="position:absolute;left:85px;top:324px;width:1px;height:18px;background:#000;"></div>
<div style="position:absolute;left:188px;top:324px;width:1px;height:18px;background:#000;"></div>
<div style="position:absolute;left:291px;top:324px;width:1px;height:18px;background:#000;"></div>
<div style="position:absolute;left:394px;top:324px;width:1px;height:18px;background:#000;"></div>
<div style="position:absolute;left:497px;top:324px;width:1px;height:18px;background:#000;"></div>
<div class="t" style="left:27.60px;top:325px;width:58px;text-align:center;letter-spacing:1.206px;color:#000;font-weight:bold;-webkit-text-stroke:0.25px currentColor;">Month</div>
<div class="t" style="left:85.54px;top:325px;width:103px;text-align:center;letter-spacing:1.089px;color:#000;font-weight:bold;-webkit-text-stroke:0.25px currentColor;">Balance</div>
<div class="t" style="left:188.42px;top:325px;width:103px;text-align:center;letter-spacing:0.844px;color:#000;font-weight:bold;-webkit-text-stroke:0.25px currentColor;">Principal</div>
<div class="t" style="left:291.75px;top:325px;width:103px;text-align:center;letter-spacing:1.504px;color:#000;font-weight:bold;-webkit-text-stroke:0.25px currentColor;">Interest</div>
<div class="t" style="left:394.77px;top:325px;width:103px;text-align:center;letter-spacing:1.542px;color:#000;font-weight:bold;-webkit-text-stroke:0.25px currentColor;">Payment</div>
<div class="t" style="left:497.62px;top:325px;width:103px;text-align:center;letter-spacing:1.239px;color:#000;font-weight:bold;-webkit-text-stroke:0.25px currentColor;">Total Interest</div>
<div style="position:absolute;left:27px;top:358px;width:574px;height:1px;background:#000;"></div>
<div style="position:absolute;left:85px;top:341px;width:1px;height:18px;background:#000;"></div>
<div style="position:absolute;left:188px;top:341px;width:1px;height:18px;background:#000;"></div>
<div class="t" style="left:85px;top:342px;width:95.92px;text-align:right;letter-spacing:0.922px;color:#000;">1,000.00</div>
<div style="position:absolute;left:85px;top:358px;width:1px;height:18px;background:#000;"></div>
<div style="position:absolute;left:188px;top:358px;width:1px;height:18px;background:#000;"></div>
<div style="position:absolute;left:291px;top:358px;width:1px;height:18px;background:#000;"></div>
<div style="position:absolute;left:394px;top:358px;width:1px;height:18px;background:#000;"></div>
<div style="position:absolute;left:497px;top:358px;width:1px;height:18px;background:#000;"></div>
<div style="position:absolute;left:600px;top:358px;width:1px;height:18px;background:#000;"></div>
<div style="position:absolute;left:27px;top:375px;width:574px;height:1px;background:#000;"></div>
<div class="t" style="left:27px;top:359px;width:43.77px;text-align:right;letter-spacing:0.766px;color:#000;">1</div>
<div class="t" style="left:85px;top:359px;width:96.03px;text-align:right;letter-spacing:1.031px;color:#000;">997.11</div>
<div class="t" style="left:188px;top:359px;width:95.92px;text-align:right;letter-spacing:0.922px;color:#000;">2.89</div>
<div class="t" style="left:291px;top:359px;width:95.92px;text-align:right;letter-spacing:0.922px;color:#000;">6.67</div>
<div class="t" style="left:394px;top:359px;width:95.92px;text-align:right;letter-spacing:0.922px;color:#000;">9.56</div>
<div class="t" style="left:497px;top:359px;width:95.92px;text-align:right;letter-spacing:0.922px;color:#000;">6.67</div>
<div style="position:absolute;left:85px;top:375px;width:1px;height:18px;background:#000;"></div>
<div style="position:absolute;left:188px;top:375px;width:1px;height:18px;background:#000;"></div>
<div style="position:absolute;left:291px;top:375px;width:1px;height:18px;background:#000;"></div>
<div style="position:absolute;left:394px;top:375px;width:1px;height:18px;background:#000;"></div>
<div style="position:absolute;left:497px;top:375px;width:1px;height:18px;background:#000;"></div>
<div style="position:absolute;left:600px;top:375px;width:1px;height:18px;background:#000;"></div>
<div style="position:absolute;left:27px;top:392px;width:574px;height:1px;background:#000;"></div>
<div class="t" style="left:27px;top:376px;width:43.77px;text-align:right;letter-spacing:0.766px;color:#000;">2</div>
<div class="t" style="left:85px;top:376px;width:95.87px;text-align:right;letter-spacing:0.870px;color:#000;">994.20</div>
<div class="t" style="left:188px;top:376px;width:95.92px;text-align:right;letter-spacing:0.922px;color:#000;">2.91</div>
<div class="t" style="left:291px;top:376px;width:95.92px;text-align:right;letter-spacing:0.922px;color:#000;">6.65</div>
<div class="t" style="left:394px;top:376px;width:95.92px;text-align:right;letter-spacing:0.922px;color:#000;">9.56</div>
<div class="t" style="left:497px;top:376px;width:95.89px;text-align:right;letter-spacing:0.891px;color:#000;">13.31</div>
<div style="position:absolute;left:85px;top:392px;width:1px;height:18px;background:#000;"></div>
<div style="position:absolute;left:188px;top:392px;width:1px;height:18px;background:#000;"></div>
<div style="position:absolute;left:291px;top:392px;width:1px;height:18px;background:#000;"></div>
<div style="position:absolute;left:394px;top:392px;width:1px;height:18px;background:#000;"></div>
<div style="position:absolute;left:497px;top:392px;width:1px;height:18px;background:#000;"></div>
<div style="position:absolute;left:600px;top:392px;width:1px;height:18px;background:#000;"></div>
<div style="position:absolute;left:27px;top:409px;width:574px;height:1px;background:#000;"></div>
<div class="t" style="left:27px;top:393px;width:43.77px;text-align:right;letter-spacing:0.766px;color:#000;">3</div>
<div class="t" style="left:85px;top:393px;width:95.87px;text-align:right;letter-spacing:0.870px;color:#000;">991.27</div>
<div class="t" style="left:188px;top:393px;width:95.92px;text-align:right;letter-spacing:0.922px;color:#000;">2.93</div>
<div class="t" style="left:291px;top:393px;width:95.92px;text-align:right;letter-spacing:0.922px;color:#000;">6.63</div>
<div class="t" style="left:394px;top:393px;width:95.92px;text-align:right;letter-spacing:0.922px;color:#000;">9.56</div>
<div class="t" style="left:497px;top:393px;width:95.89px;text-align:right;letter-spacing:0.891px;color:#000;">19.94</div>
<div style="position:absolute;left:85px;top:409px;width:1px;height:18px;background:#000;"></div>
<div style="position:absolute;left:188px;top:409px;width:1px;height:18px;background:#000;"></div>
<div style="position:absolute;left:291px;top:409px;width:1px;height:18px;background:#000;"></div>
<div style="position:absolute;left:394px;top:409px;width:1px;height:18px;background:#000;"></div>
<div style="position:absolute;left:497px;top:409px;width:1px;height:18px;background:#000;"></div>
<div style="position:absolute;left:600px;top:409px;width:1px;height:18px;background:#000;"></div>
<div style="position:absolute;left:27px;top:426px;width:574px;height:1px;background:#000;"></div>
<div class="t" style="left:27px;top:410px;width:43.77px;text-align:right;letter-spacing:0.766px;color:#000;">4</div>
<div class="t" style="left:85px;top:410px;width:95.87px;text-align:right;letter-spacing:0.870px;color:#000;">988.32</div>
<div class="t" style="left:188px;top:410px;width:95.92px;text-align:right;letter-spacing:0.922px;color:#000;">2.95</div>
<div class="t" style="left:291px;top:410px;width:95.92px;text-align:right;letter-spacing:0.922px;color:#000;">6.61</div>
<div class="t" style="left:394px;top:410px;width:95.92px;text-align:right;letter-spacing:0.922px;color:#000;">9.56</div>
<div class="t" style="left:497px;top:410px;width:95.89px;text-align:right;letter-spacing:0.891px;color:#000;">26.55</div>
<div style="position:absolute;left:85px;top:426px;width:1px;height:18px;background:#000;"></div>
<div style="position:absolute;left:188px;top:426px;width:1px;height:18px;background:#000;"></div>
<div style="position:absolute;left:291px;top:426px;width:1px;height:18px;background:#000;"></div>
<div style="position:absolute;left:394px;top:426px;width:1px;height:18px;background:#000;"></div>
<div style="position:absolute;left:497px;top:426px;width:1px;height:18px;background:#000;"></div>
<div style="position:absolute;left:600px;top:426px;width:1px;height:18px;background:#000;"></div>
<div style="position:absolute;left:27px;top:443px;width:574px;height:1px;background:#000;"></div>
<div class="t" style="left:27px;top:427px;width:43.77px;text-align:right;letter-spacing:0.766px;color:#000;">5</div>
<div class="t" style="left:85px;top:427px;width:95.87px;text-align:right;letter-spacing:0.870px;color:#000;">985.36</div>
<div class="t" style="left:188px;top:427px;width:95.92px;text-align:right;letter-spacing:0.922px;color:#000;">2.97</div>
<div class="t" style="left:291px;top:427px;width:95.92px;text-align:right;letter-spacing:0.922px;color:#000;">6.59</div>
<div class="t" style="left:394px;top:427px;width:95.92px;text-align:right;letter-spacing:0.922px;color:#000;">9.56</div>
<div class="t" style="left:497px;top:427px;width:95.89px;text-align:right;letter-spacing:0.891px;color:#000;">33.14</div>
<div style="position:absolute;left:85px;top:443px;width:1px;height:18px;background:#000;"></div>
<div style="position:absolute;left:188px;top:443px;width:1px;height:18px;background:#000;"></div>
<div style="position:absolute;left:291px;top:443px;width:1px;height:18px;background:#000;"></div>
<div style="position:absolute;left:394px;top:443px;width:1px;height:18px;background:#000;"></div>
<div style="position:absolute;left:497px;top:443px;width:1px;height:18px;background:#000;"></div>
<div style="position:absolute;left:600px;top:443px;width:1px;height:18px;background:#000;"></div>
<div style="position:absolute;left:27px;top:460px;width:574px;height:1px;background:#000;"></div>
<div class="t" style="left:27px;top:444px;width:43.77px;text-align:right;letter-spacing:0.766px;color:#000;">6</div>
<div class="t" style="left:85px;top:444px;width:95.87px;text-align:right;letter-spacing:0.870px;color:#000;">982.37</div>
<div class="t" style="left:188px;top:444px;width:95.92px;text-align:right;letter-spacing:0.922px;color:#000;">2.99</div>
<div class="t" style="left:291px;top:444px;width:95.92px;text-align:right;letter-spacing:0.922px;color:#000;">6.57</div>
<div class="t" style="left:394px;top:444px;width:95.92px;text-align:right;letter-spacing:0.922px;color:#000;">9.56</div>
<div class="t" style="left:497px;top:444px;width:95.89px;text-align:right;letter-spacing:0.891px;color:#000;">39.71</div>
<div style="position:absolute;left:85px;top:460px;width:1px;height:18px;background:#000;"></div>
<div style="position:absolute;left:188px;top:460px;width:1px;height:18px;background:#000;"></div>
<div style="position:absolute;left:291px;top:460px;width:1px;height:18px;background:#000;"></div>
<div style="position:absolute;left:394px;top:460px;width:1px;height:18px;background:#000;"></div>
<div style="position:absolute;left:497px;top:460px;width:1px;height:18px;background:#000;"></div>
<div style="position:absolute;left:600px;top:460px;width:1px;height:18px;background:#000;"></div>
<div style="position:absolute;left:27px;top:477px;width:574px;height:1px;background:#000;"></div>
<div class="t" style="left:27px;top:461px;width:43.77px;text-align:right;letter-spacing:0.766px;color:#000;">7</div>
<div class="t" style="left:85px;top:461px;width:95.87px;text-align:right;letter-spacing:0.870px;color:#000;">979.36</div>
<div class="t" style="left:188px;top:461px;width:95.92px;text-align:right;letter-spacing:0.922px;color:#000;">3.01</div>
<div class="t" style="left:291px;top:461px;width:95.92px;text-align:right;letter-spacing:0.922px;color:#000;">6.55</div>
<div class="t" style="left:394px;top:461px;width:95.92px;text-align:right;letter-spacing:0.922px;color:#000;">9.56</div>
<div class="t" style="left:497px;top:461px;width:95.89px;text-align:right;letter-spacing:0.891px;color:#000;">46.26</div>
<div style="position:absolute;left:85px;top:477px;width:1px;height:18px;background:#000;"></div>
<div style="position:absolute;left:188px;top:477px;width:1px;height:18px;background:#000;"></div>
<div style="position:absolute;left:291px;top:477px;width:1px;height:18px;background:#000;"></div>
<div style="position:absolute;left:394px;top:477px;width:1px;height:18px;background:#000;"></div>
<div style="position:absolute;left:497px;top:477px;width:1px;height:18px;background:#000;"></div>
<div style="position:absolute;left:600px;top:477px;width:1px;height:18px;background:#000;"></div>
<div style="position:absolute;left:27px;top:494px;width:574px;height:1px;background:#000;"></div>
<div class="t" style="left:27px;top:478px;width:43.77px;text-align:right;letter-spacing:0.766px;color:#000;">8</div>
<div class="t" style="left:85px;top:478px;width:95.87px;text-align:right;letter-spacing:0.870px;color:#000;">976.33</div>
<div class="t" style="left:188px;top:478px;width:95.92px;text-align:right;letter-spacing:0.922px;color:#000;">3.03</div>
<div class="t" style="left:291px;top:478px;width:95.92px;text-align:right;letter-spacing:0.922px;color:#000;">6.53</div>
<div class="t" style="left:394px;top:478px;width:95.92px;text-align:right;letter-spacing:0.922px;color:#000;">9.56</div>
<div class="t" style="left:497px;top:478px;width:95.89px;text-align:right;letter-spacing:0.891px;color:#000;">52.79</div>
<div style="position:absolute;left:85px;top:494px;width:1px;height:18px;background:#000;"></div>
<div style="position:absolute;left:188px;top:494px;width:1px;height:18px;background:#000;"></div>
<div style="position:absolute;left:291px;top:494px;width:1px;height:18px;background:#000;"></div>
<div style="position:absolute;left:394px;top:494px;width:1px;height:18px;background:#000;"></div>
<div style="position:absolute;left:497px;top:494px;width:1px;height:18px;background:#000;"></div>
<div style="position:absolute;left:600px;top:494px;width:1px;height:18px;background:#000;"></div>
<div style="position:absolute;left:27px;top:511px;width:574px;height:1px;background:#000;"></div>
<div class="t" style="left:27px;top:495px;width:43.77px;text-align:right;letter-spacing:0.766px;color:#000;">9</div>
<div class="t" style="left:85px;top:495px;width:95.87px;text-align:right;letter-spacing:0.870px;color:#000;">973.29</div>
<div class="t" style="left:188px;top:495px;width:95.92px;text-align:right;letter-spacing:0.922px;color:#000;">3.05</div>
<div class="t" style="left:291px;top:495px;width:95.92px;text-align:right;letter-spacing:0.922px;color:#000;">6.51</div>
<div class="t" style="left:394px;top:495px;width:95.92px;text-align:right;letter-spacing:0.922px;color:#000;">9.56</div>
<div class="t" style="left:497px;top:495px;width:95.89px;text-align:right;letter-spacing:0.891px;color:#000;">59.30</div>
<div style="position:absolute;left:85px;top:511px;width:1px;height:18px;background:#000;"></div>
<div style="position:absolute;left:188px;top:511px;width:1px;height:18px;background:#000;"></div>
<div style="position:absolute;left:291px;top:511px;width:1px;height:18px;background:#000;"></div>
<div style="position:absolute;left:394px;top:511px;width:1px;height:18px;background:#000;"></div>
<div style="position:absolute;left:497px;top:511px;width:1px;height:18px;background:#000;"></div>
<div style="position:absolute;left:600px;top:511px;width:1px;height:18px;background:#000;"></div>
<div style="position:absolute;left:27px;top:528px;width:574px;height:1px;background:#000;"></div>
<div class="t" style="left:27px;top:512px;width:43.77px;text-align:right;letter-spacing:0.766px;color:#000;">10</div>
<div class="t" style="left:85px;top:512px;width:95.87px;text-align:right;letter-spacing:0.870px;color:#000;">970.22</div>
<div class="t" style="left:188px;top:512px;width:95.92px;text-align:right;letter-spacing:0.922px;color:#000;">3.07</div>
<div class="t" style="left:291px;top:512px;width:95.92px;text-align:right;letter-spacing:0.922px;color:#000;">6.49</div>
<div class="t" style="left:394px;top:512px;width:95.92px;text-align:right;letter-spacing:0.922px;color:#000;">9.56</div>
<div class="t" style="left:497px;top:512px;width:95.89px;text-align:right;letter-spacing:0.891px;color:#000;">65.78</div>
<div style="position:absolute;left:85px;top:528px;width:1px;height:18px;background:#000;"></div>
<div style="position:absolute;left:188px;top:528px;width:1px;height:18px;background:#000;"></div>
<div style="position:absolute;left:291px;top:528px;width:1px;height:18px;background:#000;"></div>
<div style="position:absolute;left:394px;top:528px;width:1px;height:18px;background:#000;"></div>
<div style="position:absolute;left:497px;top:528px;width:1px;height:18px;background:#000;"></div>
<div style="position:absolute;left:600px;top:528px;width:1px;height:18px;background:#000;"></div>
<div style="position:absolute;left:27px;top:545px;width:574px;height:1px;background:#000;"></div>
<div class="t" style="left:27px;top:529px;width:44.25px;text-align:right;letter-spacing:1.250px;color:#000;">11</div>
<div class="t" style="left:85px;top:529px;width:95.87px;text-align:right;letter-spacing:0.870px;color:#000;">967.13</div>
<div class="t" style="left:188px;top:529px;width:95.92px;text-align:right;letter-spacing:0.922px;color:#000;">3.09</div>
<div class="t" style="left:291px;top:529px;width:95.92px;text-align:right;letter-spacing:0.922px;color:#000;">6.47</div>
<div class="t" style="left:394px;top:529px;width:95.92px;text-align:right;letter-spacing:0.922px;color:#000;">9.56</div>
<div class="t" style="left:497px;top:529px;width:95.89px;text-align:right;letter-spacing:0.891px;color:#000;">72.25</div>
<div style="position:absolute;left:85px;top:545px;width:1px;height:18px;background:#000;"></div>
<div style="position:absolute;left:188px;top:545px;width:1px;height:18px;background:#000;"></div>
<div style="position:absolute;left:291px;top:545px;width:1px;height:18px;background:#000;"></div>
<div style="position:absolute;left:394px;top:545px;width:1px;height:18px;background:#000;"></div>
<div style="position:absolute;left:497px;top:545px;width:1px;height:18px;background:#000;"></div>
<div style="position:absolute;left:600px;top:545px;width:1px;height:18px;background:#000;"></div>
<div style="position:absolute;left:27px;top:562px;width:574px;height:1px;background:#000;"></div>
<div class="t" style="left:27px;top:546px;width:43.77px;text-align:right;letter-spacing:0.766px;color:#000;">12</div>
<div class="t" style="left:85px;top:546px;width:95.87px;text-align:right;letter-spacing:0.870px;color:#000;">964.02</div>
<div class="t" style="left:188px;top:546px;width:96.16px;text-align:right;letter-spacing:1.164px;color:#000;">3.11</div>
<div class="t" style="left:291px;top:546px;width:95.92px;text-align:right;letter-spacing:0.922px;color:#000;">6.45</div>
<div class="t" style="left:394px;top:546px;width:95.92px;text-align:right;letter-spacing:0.922px;color:#000;">9.56</div>
<div class="t" style="left:497px;top:546px;width:95.89px;text-align:right;letter-spacing:0.891px;color:#000;">78.70</div>
<div style="position:absolute;left:85px;top:562px;width:1px;height:18px;background:#000;"></div>
<div style="position:absolute;left:188px;top:562px;width:1px;height:18px;background:#000;"></div>
<div style="position:absolute;left:291px;top:562px;width:1px;height:18px;background:#000;"></div>
<div style="position:absolute;left:394px;top:562px;width:1px;height:18px;background:#000;"></div>
<div style="position:absolute;left:497px;top:562px;width:1px;height:18px;background:#000;"></div>
<div style="position:absolute;left:600px;top:562px;width:1px;height:18px;background:#000;"></div>
<div style="position:absolute;left:27px;top:579px;width:574px;height:1px;background:#000;"></div>
<div class="t" style="left:27px;top:563px;width:43.77px;text-align:right;letter-spacing:0.766px;color:#000;">13</div>
<div class="t" style="left:85px;top:563px;width:95.87px;text-align:right;letter-spacing:0.870px;color:#000;">960.89</div>
<div class="t" style="left:188px;top:563px;width:95.92px;text-align:right;letter-spacing:0.922px;color:#000;">3.13</div>
<div class="t" style="left:291px;top:563px;width:95.92px;text-align:right;letter-spacing:0.922px;color:#000;">6.43</div>
<div class="t" style="left:394px;top:563px;width:95.92px;text-align:right;letter-spacing:0.922px;color:#000;">9.56</div>
<div class="t" style="left:497px;top:563px;width:95.89px;text-align:right;letter-spacing:0.891px;color:#000;">85.13</div>
<div style="position:absolute;left:85px;top:579px;width:1px;height:18px;background:#000;"></div>
<div style="position:absolute;left:188px;top:579px;width:1px;height:18px;background:#000;"></div>
<div style="position:absolute;left:291px;top:579px;width:1px;height:18px;background:#000;"></div>
<div style="position:absolute;left:394px;top:579px;width:1px;height:18px;background:#000;"></div>
<div style="position:absolute;left:497px;top:579px;width:1px;height:18px;background:#000;"></div>
<div style="position:absolute;left:600px;top:579px;width:1px;height:18px;background:#000;"></div>
<div style="position:absolute;left:27px;top:596px;width:574px;height:1px;background:#000;"></div>
<div class="t" style="left:27px;top:580px;width:43.77px;text-align:right;letter-spacing:0.766px;color:#000;">14</div>
<div class="t" style="left:85px;top:580px;width:95.87px;text-align:right;letter-spacing:0.870px;color:#000;">957.74</div>
<div class="t" style="left:188px;top:580px;width:95.92px;text-align:right;letter-spacing:0.922px;color:#000;">3.15</div>
<div class="t" style="left:291px;top:580px;width:95.92px;text-align:right;letter-spacing:0.922px;color:#000;">6.41</div>
<div class="t" style="left:394px;top:580px;width:95.92px;text-align:right;letter-spacing:0.922px;color:#000;">9.56</div>
<div class="t" style="left:497px;top:580px;width:95.89px;text-align:right;letter-spacing:0.891px;color:#000;">91.53</div>
<div style="position:absolute;left:85px;top:596px;width:1px;height:18px;background:#000;"></div>
<div style="position:absolute;left:188px;top:596px;width:1px;height:18px;background:#000;"></div>
<div style="position:absolute;left:291px;top:596px;width:1px;height:18px;background:#000;"></div>
<div style="position:absolute;left:394px;top:596px;width:1px;height:18px;background:#000;"></div>
<div style="position:absolute;left:497px;top:596px;width:1px;height:18px;background:#000;"></div>
<div style="position:absolute;left:600px;top:596px;width:1px;height:18px;background:#000;"></div>
<div style="position:absolute;left:27px;top:613px;width:574px;height:1px;background:#000;"></div>
<div class="t" style="left:27px;top:597px;width:43.77px;text-align:right;letter-spacing:0.766px;color:#000;">15</div>
<div class="t" style="left:85px;top:597px;width:95.87px;text-align:right;letter-spacing:0.870px;color:#000;">954.57</div>
<div class="t" style="left:188px;top:597px;width:95.92px;text-align:right;letter-spacing:0.922px;color:#000;">3.17</div>
<div class="t" style="left:291px;top:597px;width:95.92px;text-align:right;letter-spacing:0.922px;color:#000;">6.38</div>
<div class="t" style="left:394px;top:597px;width:95.92px;text-align:right;letter-spacing:0.922px;color:#000;">9.56</div>
<div class="t" style="left:497px;top:597px;width:95.89px;text-align:right;letter-spacing:0.891px;color:#000;">97.92</div>
<div style="position:absolute;left:85px;top:613px;width:1px;height:18px;background:#000;"></div>
<div style="position:absolute;left:188px;top:613px;width:1px;height:18px;background:#000;"></div>
<div style="position:absolute;left:291px;top:613px;width:1px;height:18px;background:#000;"></div>
<div style="position:absolute;left:394px;top:613px;width:1px;height:18px;background:#000;"></div>
<div style="position:absolute;left:497px;top:613px;width:1px;height:18px;background:#000;"></div>
<div style="position:absolute;left:600px;top:613px;width:1px;height:18px;background:#000;"></div>
<div style="position:absolute;left:27px;top:630px;width:574px;height:1px;background:#000;"></div>
<div class="t" style="left:27px;top:614px;width:43.77px;text-align:right;letter-spacing:0.766px;color:#000;">16</div>
<div class="t" style="left:85px;top:614px;width:95.87px;text-align:right;letter-spacing:0.870px;color:#000;">951.38</div>
<div class="t" style="left:188px;top:614px;width:95.92px;text-align:right;letter-spacing:0.922px;color:#000;">3.19</div>
<div class="t" style="left:291px;top:614px;width:95.92px;text-align:right;letter-spacing:0.922px;color:#000;">6.36</div>
<div class="t" style="left:394px;top:614px;width:95.92px;text-align:right;letter-spacing:0.922px;color:#000;">9.56</div>
<div class="t" style="left:497px;top:614px;width:95.87px;text-align:right;letter-spacing:0.870px;color:#000;">104.28</div>
<div style="position:absolute;left:85px;top:630px;width:1px;height:18px;background:#000;"></div>
<div style="position:absolute;left:188px;top:630px;width:1px;height:18px;background:#000;"></div>
<div style="position:absolute;left:291px;top:630px;width:1px;height:18px;background:#000;"></div>
<div style="position:absolute;left:394px;top:630px;width:1px;height:18px;background:#000;"></div>
<div style="position:absolute;left:497px;top:630px;width:1px;height:18px;background:#000;"></div>
<div style="position:absolute;left:600px;top:630px;width:1px;height:18px;background:#000;"></div>
<div style="position:absolute;left:27px;top:647px;width:574px;height:1px;background:#000;"></div>
<div class="t" style="left:27px;top:631px;width:43.77px;text-align:right;letter-spacing:0.766px;color:#000;">17</div>
<div class="t" style="left:85px;top:631px;width:95.87px;text-align:right;letter-spacing:0.870px;color:#000;">948.16</div>
<div class="t" style="left:188px;top:631px;width:95.92px;text-align:right;letter-spacing:0.922px;color:#000;">3.21</div>
<div class="t" style="left:291px;top:631px;width:95.92px;text-align:right;letter-spacing:0.922px;color:#000;">6.34</div>
<div class="t" style="left:394px;top:631px;width:95.92px;text-align:right;letter-spacing:0.922px;color:#000;">9.56</div>
<div class="t" style="left:497px;top:631px;width:96.03px;text-align:right;letter-spacing:1.031px;color:#000;">110.62</div>
<div style="position:absolute;left:85px;top:647px;width:1px;height:18px;background:#000;"></div>
<div style="position:absolute;left:188px;top:647px;width:1px;height:18px;background:#000;"></div>
<div style="position:absolute;left:291px;top:647px;width:1px;height:18px;background:#000;"></div>
<div style="position:absolute;left:394px;top:647px;width:1px;height:18px;background:#000;"></div>
<div style="position:absolute;left:497px;top:647px;width:1px;height:18px;background:#000;"></div>
<div style="position:absolute;left:600px;top:647px;width:1px;height:18px;background:#000;"></div>
<div style="position:absolute;left:27px;top:664px;width:574px;height:1px;background:#000;"></div>
<div class="t" style="left:27px;top:648px;width:43.77px;text-align:right;letter-spacing:0.766px;color:#000;">18</div>
<div class="t" style="left:85px;top:648px;width:95.87px;text-align:right;letter-spacing:0.870px;color:#000;">944.93</div>
<div class="t" style="left:188px;top:648px;width:95.92px;text-align:right;letter-spacing:0.922px;color:#000;">3.24</div>
<div class="t" style="left:291px;top:648px;width:95.92px;text-align:right;letter-spacing:0.922px;color:#000;">6.32</div>
<div class="t" style="left:394px;top:648px;width:95.92px;text-align:right;letter-spacing:0.922px;color:#000;">9.56</div>
<div class="t" style="left:497px;top:648px;width:96.03px;text-align:right;letter-spacing:1.031px;color:#000;">116.94</div>
<div style="position:absolute;left:85px;top:664px;width:1px;height:18px;background:#000;"></div>
<div style="position:absolute;left:188px;top:664px;width:1px;height:18px;background:#000;"></div>
<div style="position:absolute;left:291px;top:664px;width:1px;height:18px;background:#000;"></div>
<div style="position:absolute;left:394px;top:664px;width:1px;height:18px;background:#000;"></div>
<div style="position:absolute;left:497px;top:664px;width:1px;height:18px;background:#000;"></div>
<div style="position:absolute;left:600px;top:664px;width:1px;height:18px;background:#000;"></div>
<div style="position:absolute;left:27px;top:681px;width:574px;height:1px;background:#000;"></div>
<div class="t" style="left:27px;top:665px;width:43.77px;text-align:right;letter-spacing:0.766px;color:#000;">19</div>
<div class="t" style="left:85px;top:665px;width:95.87px;text-align:right;letter-spacing:0.870px;color:#000;">941.67</div>
<div class="t" style="left:188px;top:665px;width:95.92px;text-align:right;letter-spacing:0.922px;color:#000;">3.26</div>
<div class="t" style="left:291px;top:665px;width:95.92px;text-align:right;letter-spacing:0.922px;color:#000;">6.30</div>
<div class="t" style="left:394px;top:665px;width:95.92px;text-align:right;letter-spacing:0.922px;color:#000;">9.56</div>
<div class="t" style="left:497px;top:665px;width:95.87px;text-align:right;letter-spacing:0.870px;color:#000;">123.24</div>
<div style="position:absolute;left:85px;top:681px;width:1px;height:18px;background:#000;"></div>
<div style="position:absolute;left:188px;top:681px;width:1px;height:18px;background:#000;"></div>
<div style="position:absolute;left:291px;top:681px;width:1px;height:18px;background:#000;"></div>
<div style="position:absolute;left:394px;top:681px;width:1px;height:18px;background:#000;"></div>
<div style="position:absolute;left:497px;top:681px;width:1px;height:18px;background:#000;"></div>
<div style="position:absolute;left:600px;top:681px;width:1px;height:18px;background:#000;"></div>
<div style="position:absolute;left:27px;top:698px;width:574px;height:1px;background:#000;"></div>
<div class="t" style="left:27px;top:682px;width:43.77px;text-align:right;letter-spacing:0.766px;color:#000;">20</div>
<div class="t" style="left:85px;top:682px;width:95.87px;text-align:right;letter-spacing:0.870px;color:#000;">938.39</div>
<div class="t" style="left:188px;top:682px;width:95.92px;text-align:right;letter-spacing:0.922px;color:#000;">3.28</div>
<div class="t" style="left:291px;top:682px;width:95.92px;text-align:right;letter-spacing:0.922px;color:#000;">6.28</div>
<div class="t" style="left:394px;top:682px;width:95.92px;text-align:right;letter-spacing:0.922px;color:#000;">9.56</div>
<div class="t" style="left:497px;top:682px;width:95.87px;text-align:right;letter-spacing:0.870px;color:#000;">129.52</div>
<div style="position:absolute;left:85px;top:698px;width:1px;height:18px;background:#000;"></div>
<div style="position:absolute;left:188px;top:698px;width:1px;height:18px;background:#000;"></div>
<div style="position:absolute;left:291px;top:698px;width:1px;height:18px;background:#000;"></div>
<div style="position:absolute;left:394px;top:698px;width:1px;height:18px;background:#000;"></div>
<div style="position:absolute;left:497px;top:698px;width:1px;height:18px;background:#000;"></div>
<div style="position:absolute;left:600px;top:698px;width:1px;height:18px;background:#000;"></div>
<div style="position:absolute;left:27px;top:715px;width:574px;height:1px;background:#000;"></div>
<div class="t" style="left:27px;top:699px;width:43.77px;text-align:right;letter-spacing:0.766px;color:#000;">21</div>
<div class="t" style="left:85px;top:699px;width:95.87px;text-align:right;letter-spacing:0.870px;color:#000;">935.09</div>
<div class="t" style="left:188px;top:699px;width:95.92px;text-align:right;letter-spacing:0.922px;color:#000;">3.30</div>
<div class="t" style="left:291px;top:699px;width:95.92px;text-align:right;letter-spacing:0.922px;color:#000;">6.26</div>
<div class="t" style="left:394px;top:699px;width:95.92px;text-align:right;letter-spacing:0.922px;color:#000;">9.56</div>
<div class="t" style="left:497px;top:699px;width:95.87px;text-align:right;letter-spacing:0.870px;color:#000;">135.78</div>
<div style="position:absolute;left:85px;top:715px;width:1px;height:18px;background:#000;"></div>
<div style="position:absolute;left:188px;top:715px;width:1px;height:18px;background:#000;"></div>
<div style="position:absolute;left:291px;top:715px;width:1px;height:18px;background:#000;"></div>
<div style="position:absolute;left:394px;top:715px;width:1px;height:18px;background:#000;"></div>
<div style="position:absolute;left:497px;top:715px;width:1px;height:18px;background:#000;"></div>
<div style="position:absolute;left:600px;top:715px;width:1px;height:18px;background:#000;"></div>
<div style="position:absolute;left:27px;top:732px;width:574px;height:1px;background:#000;"></div>
<div class="t" style="left:27px;top:716px;width:43.77px;text-align:right;letter-spacing:0.766px;color:#000;">22</div>
<div class="t" style="left:85px;top:716px;width:95.87px;text-align:right;letter-spacing:0.870px;color:#000;">931.77</div>
<div class="t" style="left:188px;top:716px;width:95.92px;text-align:right;letter-spacing:0.922px;color:#000;">3.32</div>
<div class="t" style="left:291px;top:716px;width:95.92px;text-align:right;letter-spacing:0.922px;color:#000;">6.23</div>
<div class="t" style="left:394px;top:716px;width:95.92px;text-align:right;letter-spacing:0.922px;color:#000;">9.56</div>
<div class="t" style="left:497px;top:716px;width:95.87px;text-align:right;letter-spacing:0.870px;color:#000;">142.01</div>
<div style="position:absolute;left:85px;top:732px;width:1px;height:18px;background:#000;"></div>
<div style="position:absolute;left:188px;top:732px;width:1px;height:18px;background:#000;"></div>
<div style="position:absolute;left:291px;top:732px;width:1px;height:18px;background:#000;"></div>
<div style="position:absolute;left:394px;top:732px;width:1px;height:18px;background:#000;"></div>
<div style="position:absolute;left:497px;top:732px;width:1px;height:18px;background:#000;"></div>
<div style="position:absolute;left:600px;top:732px;width:1px;height:18px;background:#000;"></div>
<div style="position:absolute;left:27px;top:749px;width:574px;height:1px;background:#000;"></div>
<div class="t" style="left:27px;top:733px;width:43.77px;text-align:right;letter-spacing:0.766px;color:#000;">23</div>
<div class="t" style="left:85px;top:733px;width:95.87px;text-align:right;letter-spacing:0.870px;color:#000;">928.42</div>
<div class="t" style="left:188px;top:733px;width:95.92px;text-align:right;letter-spacing:0.922px;color:#000;">3.34</div>
<div class="t" style="left:291px;top:733px;width:95.92px;text-align:right;letter-spacing:0.922px;color:#000;">6.21</div>
<div class="t" style="left:394px;top:733px;width:95.92px;text-align:right;letter-spacing:0.922px;color:#000;">9.56</div>
<div class="t" style="left:497px;top:733px;width:95.87px;text-align:right;letter-spacing:0.870px;color:#000;">148.22</div>
<div style="position:absolute;left:85px;top:749px;width:1px;height:14px;background:#000;"></div>
<div style="position:absolute;left:188px;top:749px;width:1px;height:14px;background:#000;"></div>
<div style="position:absolute;left:291px;top:749px;width:1px;height:14px;background:#000;"></div>
<div style="position:absolute;left:394px;top:749px;width:1px;height:14px;background:#000;"></div>
<div style="position:absolute;left:497px;top:749px;width:1px;height:14px;background:#000;"></div>
<div style="position:absolute;left:600px;top:749px;width:1px;height:14px;background:#000;"></div>
<div class="t" style="left:27px;top:750px;width:43.77px;text-align:right;letter-spacing:0.766px;color:#000;clip-path:inset(0 0 4px 0);">24</div>
<div class="t" style="left:85px;top:750px;width:95.87px;text-align:right;letter-spacing:0.870px;color:#000;clip-path:inset(0 0 4px 0);">925.06</div>
<div class="t" style="left:188px;top:750px;width:95.92px;text-align:right;letter-spacing:0.922px;color:#000;clip-path:inset(0 0 4px 0);">3.37</div>
<div class="t" style="left:291px;top:750px;width:95.92px;text-align:right;letter-spacing:0.922px;color:#000;clip-path:inset(0 0 4px 0);">6.19</div>
<div class="t" style="left:394px;top:750px;width:95.92px;text-align:right;letter-spacing:0.922px;color:#000;clip-path:inset(0 0 4px 0);">9.56</div>
<div class="t" style="left:497px;top:750px;width:95.87px;text-align:right;letter-spacing:0.870px;color:#000;clip-path:inset(0 0 4px 0);">154.41</div>
<div style="position:absolute;left:1262px;top:120px;width:16px;height:643px;background:linear-gradient(90deg,#E6E7E0 0px,#E6E7E0 1px,#F4F1EC 2px,#F5F2ED 4px,#F9F9F6 9px,#FCFDF7 16px);"></div>
<div style="position:absolute;left:1278px;top:120px;width:1px;height:643px;background:#EEF0E8;"></div>
<div style="position:absolute;left:1279px;top:120px;width:1px;height:643px;background:#FFFFFF;"></div>
<div style="position:absolute;left:1262px;top:120px;width:16px;height:6px;background:#ECE9D8;border-top:1px solid #7D7B6E;"></div>
<div style="position:absolute;left:1262px;top:126px;width:16px;height:1px;background:#000;"></div>
<div style="position:absolute;left:1263px;top:127px;width:15px;height:16px;background:linear-gradient(135deg,#D2E0FD,#B6CCF8 60%,#A8C0F5);border:1px solid #FFFFFF;border-radius:2px;box-shadow:inset 0 0 0 1px #BCD0F5;"></div>
<svg style="left:1266px;top:132px" width="9" height="6"><path d="M1 5L4.5 1.5L8 5" stroke="#4D6185" stroke-width="2" fill="none"/></svg>
<div style="position:absolute;left:1263px;top:144px;width:15px;height:58px;background:linear-gradient(90deg,#C9D9FC,#BBCFF9 50%,#B3C8F6);border:1px solid #fff;border-radius:2px;"></div>
<div style="position:absolute;left:1267px;top:169px;width:7px;height:1px;background:#EEF4FE;box-shadow:1px 1px #8CA8E0;"></div>
<div style="position:absolute;left:1267px;top:171px;width:7px;height:1px;background:#EEF4FE;box-shadow:1px 1px #8CA8E0;"></div>
<div style="position:absolute;left:1267px;top:173px;width:7px;height:1px;background:#EEF4FE;box-shadow:1px 1px #8CA8E0;"></div>
<div style="position:absolute;left:1267px;top:175px;width:7px;height:1px;background:#EEF4FE;box-shadow:1px 1px #8CA8E0;"></div>
<div style="position:absolute;left:1263px;top:747px;width:15px;height:16px;background:linear-gradient(135deg,#D2E0FD,#B6CCF8 60%,#A8C0F5);border:1px solid #FFFFFF;border-radius:2px;box-shadow:inset 0 0 0 1px #BCD0F5;"></div>
<svg style="left:1266px;top:753px" width="9" height="6"><path d="M1 1L4.5 4.5L8 1" stroke="#4D6185" stroke-width="2" fill="none"/></svg>
<div style="position:absolute;left:0px;top:763px;width:763px;height:16px;background:#ECE9D8;border-top:1px solid #ACA899;"></div>
<svg style="left:0px;top:764px" width="66" height="15"><path d="M5 4h1v8H5zM10 4v8L6 8z" fill="#000"/><path d="M27 4v8L23 8z" fill="#000"/><path d="M39 4v8L43 8z" fill="#000"/><path d="M55 4v8L59 8zM60 4h1v8h-1z" fill="#000"/></svg>
<div style="position:absolute;left:65px;top:764px;width:1px;height:15px;background:#ACA899;"></div>
<svg style="left:64px;top:763px" width="166" height="17"><path d="M1.5 0.5L9 15.5H153L161.5 0.5Z" fill="#fff"/><path d="M1.5 0.5L9 15.5M153 15.5L161.5 0.5" stroke="#000" stroke-width="1.1" fill="none"/><path d="M9 15.5H153" stroke="#ACA899"/></svg>
<div style="position:absolute;left:76px;top:765px;font-size:12px;line-height:15px;font-weight:bold;letter-spacing:0.4px;-webkit-text-stroke:0.2px #000;">Amortization Schedule</div>
<div style="position:absolute;left:762px;top:763px;width:1px;height:16px;background:#000;"></div>
<div style="position:absolute;left:763px;top:763px;width:499px;height:16px;background:linear-gradient(#F3F1EC,#FEFEFB 50%,#F0EEE6);"></div>
<div style="position:absolute;left:765px;top:764px;width:15px;height:15px;background:linear-gradient(135deg,#D2E0FD,#B6CCF8 60%,#A8C0F5);border:1px solid #FFFFFF;border-radius:2px;box-shadow:inset 0 0 0 1px #BCD0F5;"></div>
<svg style="left:769px;top:768px" width="6" height="9"><path d="M5 1L1.5 4.5L5 8" stroke="#4D6185" stroke-width="2" fill="none"/></svg>
<div style="position:absolute;left:781px;top:764px;width:402px;height:15px;background:linear-gradient(#C9D9FC,#BBCFF9 50%,#B3C8F6);border:1px solid #fff;border-radius:2px;"></div>
<div style="position:absolute;left:978px;top:768px;width:1px;height:7px;background:#EEF4FE;"></div>
<div style="position:absolute;left:980px;top:768px;width:1px;height:7px;background:#EEF4FE;"></div>
<div style="position:absolute;left:982px;top:768px;width:1px;height:7px;background:#EEF4FE;"></div>
<div style="position:absolute;left:984px;top:768px;width:1px;height:7px;background:#EEF4FE;"></div>
<div style="position:absolute;left:1241px;top:764px;width:15px;height:15px;background:linear-gradient(135deg,#D2E0FD,#B6CCF8 60%,#A8C0F5);border:1px solid #FFFFFF;border-radius:2px;box-shadow:inset 0 0 0 1px #BCD0F5;"></div>
<svg style="left:1246px;top:768px" width="6" height="9"><path d="M1 1L4.5 4.5L1 8" stroke="#4D6185" stroke-width="2" fill="none"/></svg>
<div style="position:absolute;left:1262px;top:763px;width:1px;height:16px;background:#000;"></div>
<div style="position:absolute;left:1263px;top:763px;width:17px;height:16px;background:#ECE9D8;"></div>
<div style="position:absolute;left:0px;top:779px;width:1280px;height:2px;background:#FCFCF8;"></div>
<div style="position:absolute;left:0px;top:781px;width:1280px;height:17px;background:#ECE9D8;"></div>
<div style="position:absolute;left:4px;top:785px;font-size:11px;line-height:13px;letter-spacing:0px;">Ready</div>
<div style="position:absolute;left:969px;top:784px;width:34px;height:14px;border:1px solid #CAC7B8;border-bottom:none;"></div>
<div style="position:absolute;left:1004px;top:784px;width:112px;height:14px;border:1px solid #CAC7B8;border-bottom:none;"></div>
<div style="position:absolute;left:1117px;top:784px;width:25px;height:14px;border:1px solid #CAC7B8;border-bottom:none;"></div>
<div style="position:absolute;left:1143px;top:784px;width:30px;height:14px;border:1px solid #CAC7B8;border-bottom:none;"></div>
<div style="position:absolute;left:1174px;top:784px;width:26px;height:14px;border:1px solid #CAC7B8;border-bottom:none;"></div>
<div style="position:absolute;left:1201px;top:784px;width:29px;height:14px;border:1px solid #CAC7B8;border-bottom:none;"></div>
<div style="position:absolute;left:1231px;top:784px;width:26px;height:14px;border:1px solid #CAC7B8;border-bottom:none;"></div>
<div style="position:absolute;left:1258px;top:784px;width:19px;height:14px;border:1px solid #CAC7B8;border-bottom:none;"></div>
<div style="position:absolute;left:0px;top:798px;width:1280px;height:2px;background:#3169C6;"></div>
</body></html>
